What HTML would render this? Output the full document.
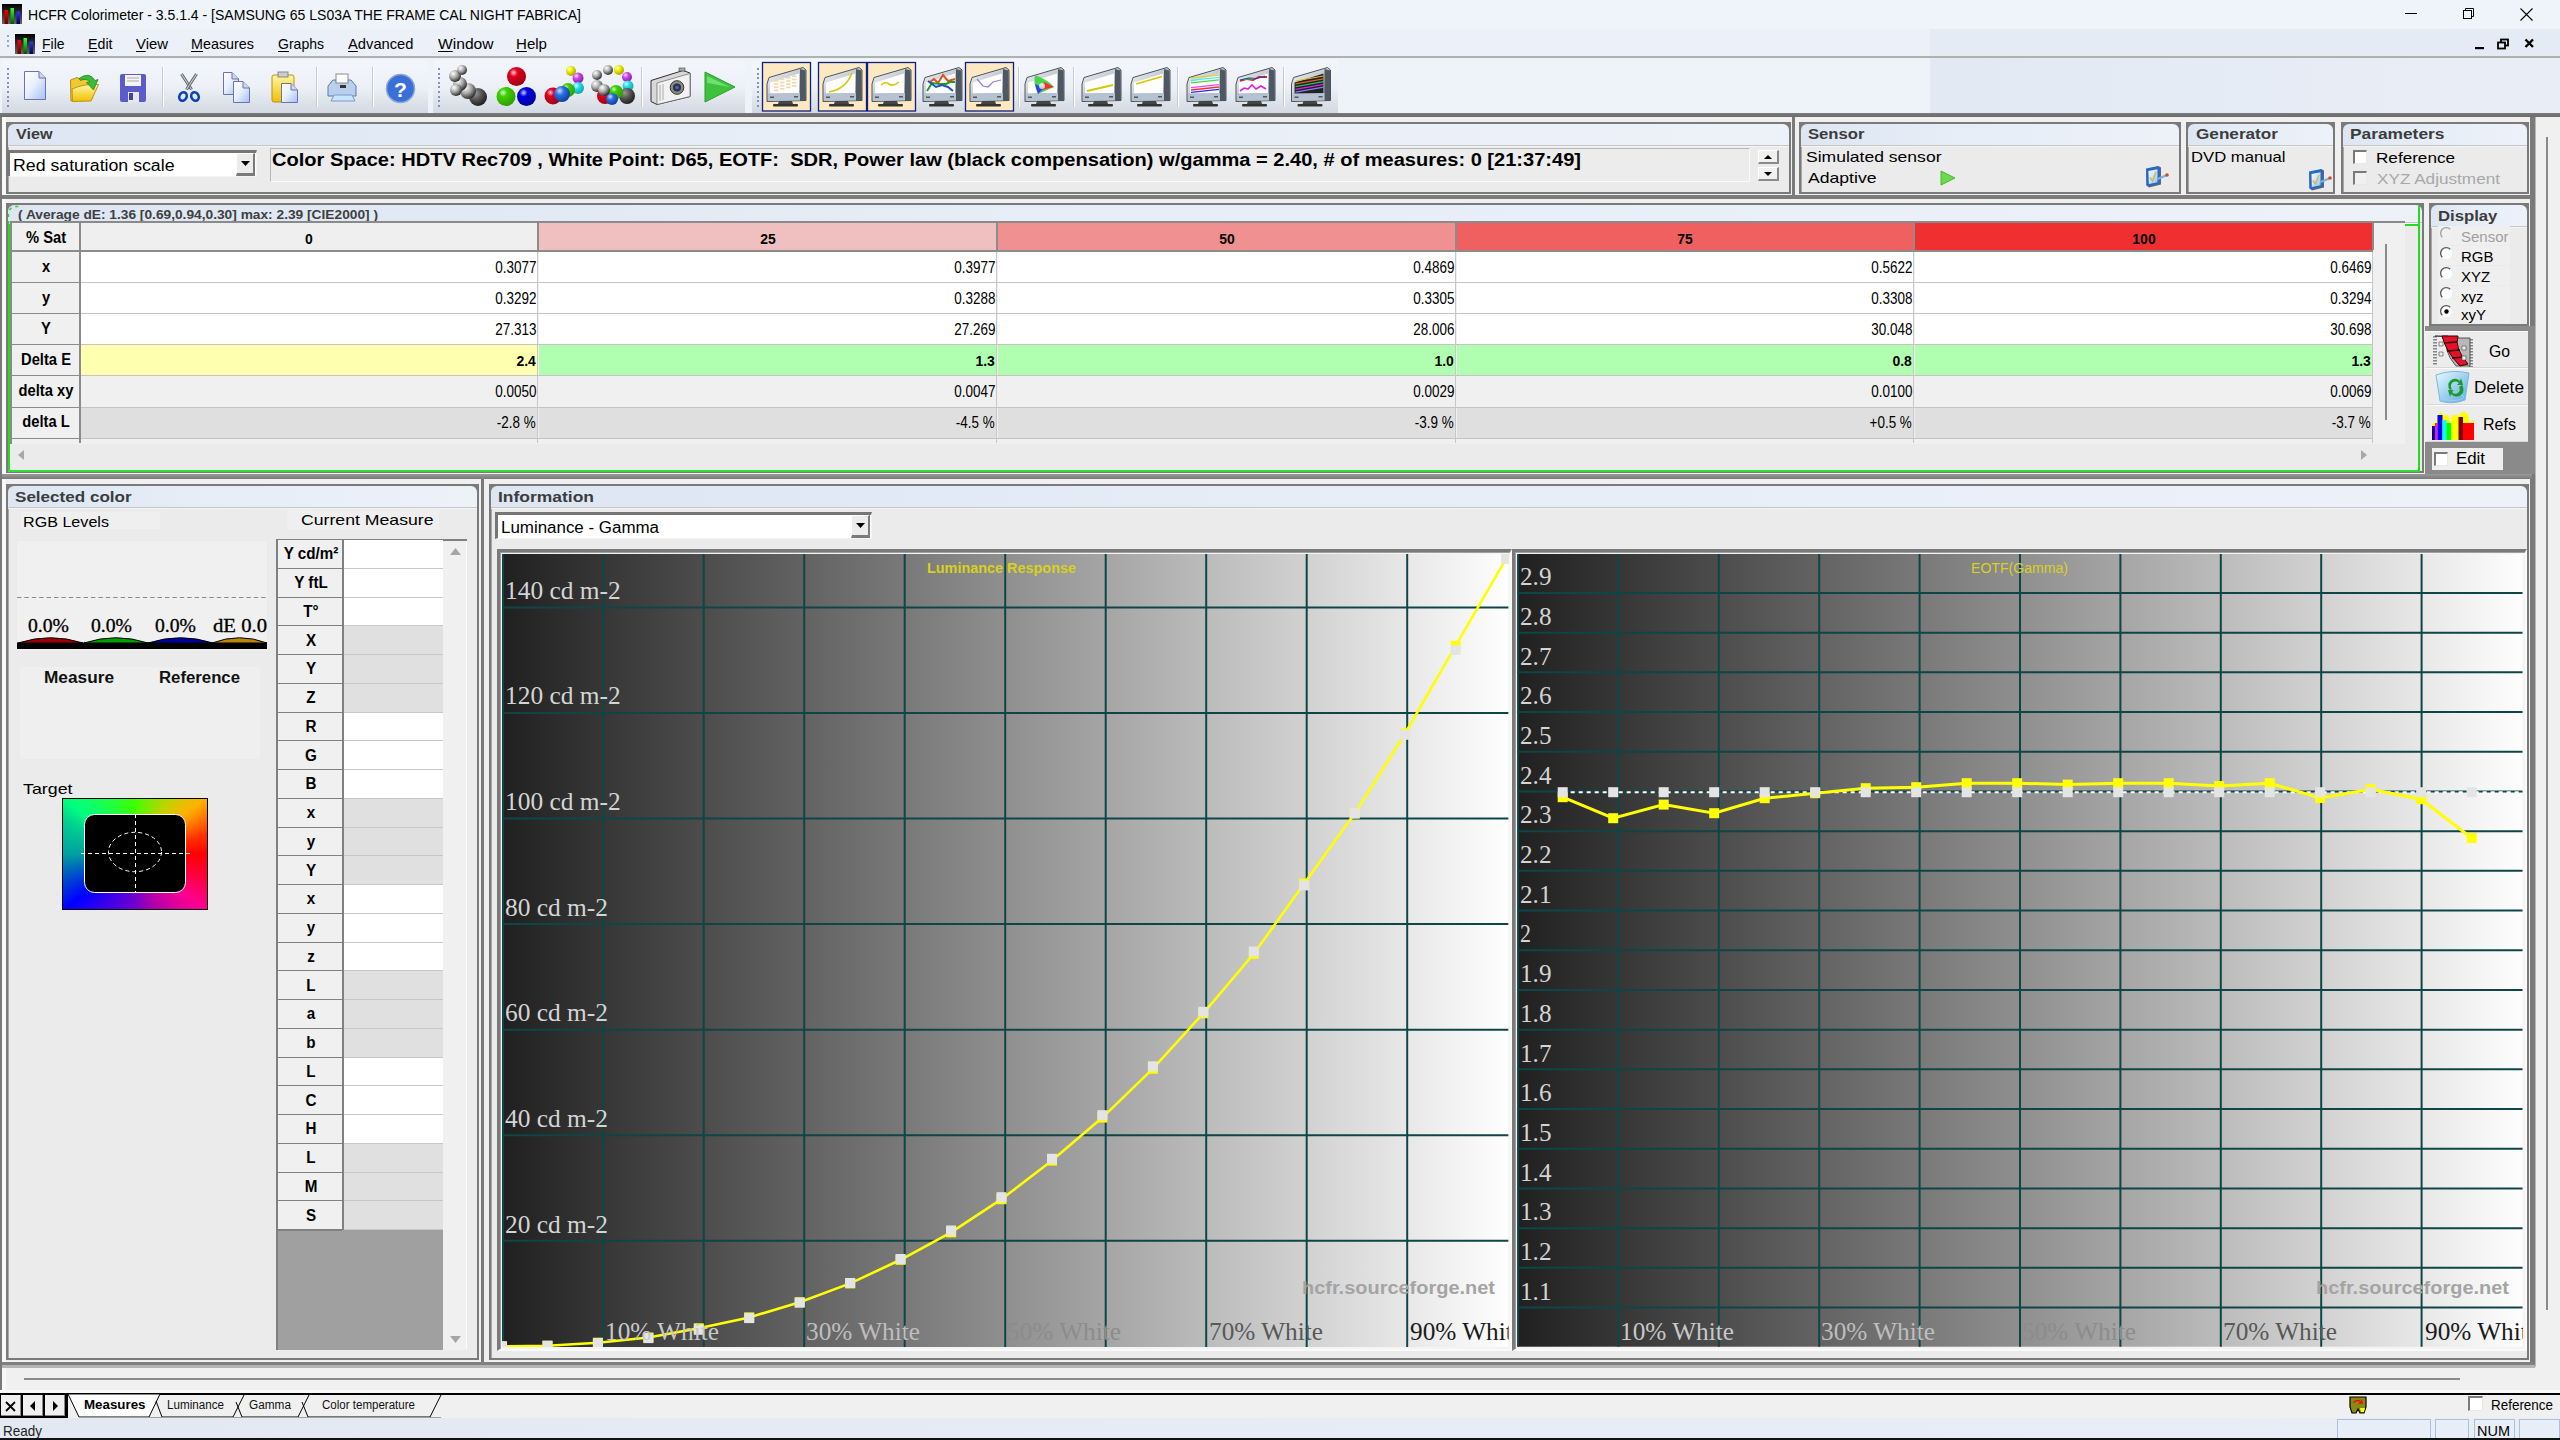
<!DOCTYPE html><html><head><meta charset="utf-8"><title>HCFR</title><style>
*{box-sizing:border-box;margin:0;padding:0}
html,body{width:2560px;height:1440px;overflow:hidden;background:#f0f0f0;font-family:"Liberation Sans",sans-serif;color:#000}
.a{position:absolute}
.t{position:absolute;white-space:nowrap;line-height:1;transform-origin:0 0}
.b{font-weight:bold}
svg{overflow:visible}
</style></head><body>
<div class="a" style="left:0px;top:0px;width:2560px;height:29px;background:#eef4f9"></div>
<svg class="a" style="left:2px;top:4px;" width="20" height="20" viewBox="0 0 20 20"><defs><linearGradient id="ig2_4" x1="0" y1="0" x2="0" y2="1"><stop offset="0" stop-color="#000"/><stop offset="1" stop-color="#666"/></linearGradient><linearGradient id="ir" x1="0" y1="0" x2="0" y2="1"><stop offset="0" stop-color="#f00"/><stop offset="1" stop-color="#600"/></linearGradient><linearGradient id="igg" x1="0" y1="0" x2="0" y2="1"><stop offset="0" stop-color="#3f3"/><stop offset="1" stop-color="#050"/></linearGradient><linearGradient id="ib" x1="0" y1="0" x2="0" y2="1"><stop offset="0" stop-color="#33f"/><stop offset="1" stop-color="#005"/></linearGradient></defs><rect width="20" height="20" fill="url(#ig2_4)"/><rect x="2.5" y="6" width="3.5" height="14" fill="url(#ir)"/><rect x="8.5" y="4" width="3.5" height="16" fill="url(#igg)"/><rect x="14.5" y="7.5" width="3.5" height="12.5" fill="url(#ib)"/></svg>
<div id="t1" class="t" style="left:28.0px;top:6.9px;font-size:15px;transform:scaleX(0.9348);">HCFR Colorimeter - 3.5.1.4 - [SAMSUNG 65 LS03A THE FRAME CAL NIGHT FABRICA]</div>
<svg class="a" style="left:2400px;top:0px;" width="160" height="29" viewBox="0 0 160 29"><line x1="5" y1="13.5" x2="17" y2="13.5" stroke="#000" stroke-width="1"/><rect x="63.5" y="10.5" width="8" height="8" fill="none" stroke="#000"/><path d="M65.5 10.5 V8.5 H73.5 V16.5 H71.5" fill="none" stroke="#000"/><path d="M120.5 8.5 L132.5 20.5 M132.5 8.5 L120.5 20.5" stroke="#000" stroke-width="1.1"/></svg>
<div class="a" style="left:0px;top:29px;width:1930px;height:28px;background:#ecf1f9"></div>
<div class="a" style="left:1930px;top:29px;width:630px;height:28px;background:#e4ebf5"></div>
<div class="a" style="left:0px;top:56px;width:2560px;height:1.5px;background:#b0b0b0"></div>
<div class="a" style="left:0px;top:57.5px;width:2560px;height:1px;background:#ffffff"></div>
<div class="a" style="left:7px;top:35px;width:2px;height:2px;background:#90a8c8"></div>
<div class="a" style="left:7px;top:40px;width:2px;height:2px;background:#90a8c8"></div>
<div class="a" style="left:7px;top:45px;width:2px;height:2px;background:#90a8c8"></div>
<svg class="a" style="left:15px;top:34px;" width="20" height="20" viewBox="0 0 20 20"><defs><linearGradient id="ig15_34" x1="0" y1="0" x2="0" y2="1"><stop offset="0" stop-color="#000"/><stop offset="1" stop-color="#666"/></linearGradient><linearGradient id="ir" x1="0" y1="0" x2="0" y2="1"><stop offset="0" stop-color="#f00"/><stop offset="1" stop-color="#600"/></linearGradient><linearGradient id="igg" x1="0" y1="0" x2="0" y2="1"><stop offset="0" stop-color="#3f3"/><stop offset="1" stop-color="#050"/></linearGradient><linearGradient id="ib" x1="0" y1="0" x2="0" y2="1"><stop offset="0" stop-color="#33f"/><stop offset="1" stop-color="#005"/></linearGradient></defs><rect width="20" height="20" fill="url(#ig15_34)"/><rect x="2.5" y="6" width="3.5" height="14" fill="url(#ir)"/><rect x="8.5" y="4" width="3.5" height="16" fill="url(#igg)"/><rect x="14.5" y="7.5" width="3.5" height="12.5" fill="url(#ib)"/></svg>
<div id="t2" class="t" style="left:41.5px;top:36.3px;font-size:15px;transform:scaleX(0.9302);"><u style="text-underline-offset:2px">F</u>ile</div>
<div id="t3" class="t" style="left:87.5px;top:36.3px;font-size:15px;transform:scaleX(0.9474);"><u style="text-underline-offset:2px">E</u>dit</div>
<div id="t4" class="t" style="left:136.0px;top:36.3px;font-size:15px;transform:scaleX(0.9922);"><u style="text-underline-offset:2px">V</u>iew</div>
<div id="t5" class="t" style="left:191.0px;top:36.3px;font-size:15px;transform:scaleX(0.9564);"><u style="text-underline-offset:2px">M</u>easures</div>
<div id="t6" class="t" style="left:277.5px;top:36.3px;font-size:15px;transform:scaleX(0.9349);"><u style="text-underline-offset:2px">G</u>raphs</div>
<div id="t7" class="t" style="left:347.5px;top:36.3px;font-size:15px;transform:scaleX(0.9815);"><u style="text-underline-offset:2px">A</u>dvanced</div>
<div id="t8" class="t" style="left:437.5px;top:36.3px;font-size:15px;transform:scaleX(1.0398);"><u style="text-underline-offset:2px">W</u>indow</div>
<div id="t9" class="t" style="left:516.0px;top:36.3px;font-size:15px;transform:scaleX(1.0040);"><u style="text-underline-offset:2px">H</u>elp</div>
<svg class="a" style="left:2463px;top:31.5px;" width="95" height="26" viewBox="0 0 95 26"><rect x="12" y="15" width="9" height="2.2" fill="#000"/><rect x="38" y="7.5" width="7" height="6" fill="none" stroke="#000" stroke-width="1.8"/><rect x="35" y="10.5" width="7" height="6" fill="#e6ecf4" stroke="#000" stroke-width="1.8"/><path d="M62.5 7.5 L70 15 M70 7.5 L62.5 15" stroke="#000" stroke-width="2.4"/></svg>
<div class="a" style="left:0px;top:58px;width:2560px;height:55px;background:#eef3fa"></div>
<div class="a" style="left:1930px;top:58px;width:630px;height:55px;background:linear-gradient(90deg,#e2e9f3,#e9eef6)"></div>
<div class="a" style="left:2px;top:60px;width:426px;height:53px;background:linear-gradient(#f3f6fb,#edf1f7 50%,#d3d9e2);border-radius:3px 3px 0 0"></div>
<div class="a" style="left:7px;top:68.0px;width:2px;height:2px;background:#7d95bd"></div>
<div class="a" style="left:7px;top:72.6px;width:2px;height:2px;background:#7d95bd"></div>
<div class="a" style="left:7px;top:77.2px;width:2px;height:2px;background:#7d95bd"></div>
<div class="a" style="left:7px;top:81.8px;width:2px;height:2px;background:#7d95bd"></div>
<div class="a" style="left:7px;top:86.4px;width:2px;height:2px;background:#7d95bd"></div>
<div class="a" style="left:7px;top:91.0px;width:2px;height:2px;background:#7d95bd"></div>
<div class="a" style="left:7px;top:95.6px;width:2px;height:2px;background:#7d95bd"></div>
<div class="a" style="left:7px;top:100.19999999999999px;width:2px;height:2px;background:#7d95bd"></div>
<div class="a" style="left:7px;top:104.8px;width:2px;height:2px;background:#7d95bd"></div>
<div class="a" style="left:433px;top:60px;width:312px;height:53px;background:linear-gradient(#f3f6fb,#edf1f7 50%,#d3d9e2);border-radius:3px 3px 0 0"></div>
<div class="a" style="left:438px;top:68.0px;width:2px;height:2px;background:#7d95bd"></div>
<div class="a" style="left:438px;top:72.6px;width:2px;height:2px;background:#7d95bd"></div>
<div class="a" style="left:438px;top:77.2px;width:2px;height:2px;background:#7d95bd"></div>
<div class="a" style="left:438px;top:81.8px;width:2px;height:2px;background:#7d95bd"></div>
<div class="a" style="left:438px;top:86.4px;width:2px;height:2px;background:#7d95bd"></div>
<div class="a" style="left:438px;top:91.0px;width:2px;height:2px;background:#7d95bd"></div>
<div class="a" style="left:438px;top:95.6px;width:2px;height:2px;background:#7d95bd"></div>
<div class="a" style="left:438px;top:100.19999999999999px;width:2px;height:2px;background:#7d95bd"></div>
<div class="a" style="left:438px;top:104.8px;width:2px;height:2px;background:#7d95bd"></div>
<div class="a" style="left:752px;top:60px;width:586px;height:53px;background:linear-gradient(#f3f6fb,#edf1f7 50%,#d3d9e2);border-radius:3px 3px 0 0"></div>
<div class="a" style="left:757px;top:68.0px;width:2px;height:2px;background:#7d95bd"></div>
<div class="a" style="left:757px;top:72.6px;width:2px;height:2px;background:#7d95bd"></div>
<div class="a" style="left:757px;top:77.2px;width:2px;height:2px;background:#7d95bd"></div>
<div class="a" style="left:757px;top:81.8px;width:2px;height:2px;background:#7d95bd"></div>
<div class="a" style="left:757px;top:86.4px;width:2px;height:2px;background:#7d95bd"></div>
<div class="a" style="left:757px;top:91.0px;width:2px;height:2px;background:#7d95bd"></div>
<div class="a" style="left:757px;top:95.6px;width:2px;height:2px;background:#7d95bd"></div>
<div class="a" style="left:757px;top:100.19999999999999px;width:2px;height:2px;background:#7d95bd"></div>
<div class="a" style="left:757px;top:104.8px;width:2px;height:2px;background:#7d95bd"></div>
<div class="a" style="left:162px;top:67px;width:1px;height:40px;background:#c5cbd3;box-shadow:1px 0 0 #fff"></div>
<div class="a" style="left:316px;top:67px;width:1px;height:40px;background:#c5cbd3;box-shadow:1px 0 0 #fff"></div>
<div class="a" style="left:372px;top:67px;width:1px;height:40px;background:#c5cbd3;box-shadow:1px 0 0 #fff"></div>
<div class="a" style="left:641px;top:67px;width:1px;height:40px;background:#c5cbd3;box-shadow:1px 0 0 #fff"></div>
<div class="a" style="left:1018px;top:67px;width:1px;height:40px;background:#c5cbd3;box-shadow:1px 0 0 #fff"></div>
<div class="a" style="left:1073px;top:67px;width:1px;height:40px;background:#c5cbd3;box-shadow:1px 0 0 #fff"></div>
<div class="a" style="left:1177px;top:67px;width:1px;height:40px;background:#c5cbd3;box-shadow:1px 0 0 #fff"></div>
<div class="a" style="left:1283px;top:67px;width:1px;height:40px;background:#c5cbd3;box-shadow:1px 0 0 #fff"></div>
<div class="a" style="left:0px;top:113px;width:2560px;height:4px;background:linear-gradient(#7a7a7a,#6b6b6b)"></div>
<svg class="a" style="left:0px;top:0px;" width="1" height="1" viewBox="0 0 1 1"><defs>
<radialGradient id="gball" cx="0.35" cy="0.3" r="0.7"><stop offset="0" stop-color="#fff"/><stop offset="0.5" stop-color="#aaa"/><stop offset="1" stop-color="#333"/></radialGradient>
<radialGradient id="rball" cx="0.35" cy="0.3" r="0.7"><stop offset="0" stop-color="#fcc"/><stop offset="0.3" stop-color="#e00020"/><stop offset="1" stop-color="#a00010"/></radialGradient>
<radialGradient id="grball" cx="0.35" cy="0.3" r="0.7"><stop offset="0" stop-color="#cfc"/><stop offset="0.3" stop-color="#40d000"/><stop offset="1" stop-color="#30a000"/></radialGradient>
<radialGradient id="bball" cx="0.35" cy="0.3" r="0.7"><stop offset="0" stop-color="#ccf"/><stop offset="0.3" stop-color="#0000e0"/><stop offset="1" stop-color="#0000a0"/></radialGradient>
<radialGradient id="yball" cx="0.35" cy="0.3" r="0.7"><stop offset="0" stop-color="#ffd"/><stop offset="0.4" stop-color="#ee0"/><stop offset="1" stop-color="#aa0"/></radialGradient>
<radialGradient id="mball" cx="0.35" cy="0.3" r="0.7"><stop offset="0" stop-color="#fdf"/><stop offset="0.4" stop-color="#c4e"/><stop offset="1" stop-color="#82a"/></radialGradient>
<radialGradient id="cball" cx="0.35" cy="0.3" r="0.7"><stop offset="0" stop-color="#dff"/><stop offset="0.4" stop-color="#2de"/><stop offset="1" stop-color="#1aa"/></radialGradient>
<radialGradient id="dball" cx="0.35" cy="0.3" r="0.7"><stop offset="0" stop-color="#999"/><stop offset="0.5" stop-color="#555"/><stop offset="1" stop-color="#222"/></radialGradient>
<radialGradient id="b2ball" cx="0.35" cy="0.3" r="0.7"><stop offset="0" stop-color="#cdf"/><stop offset="0.4" stop-color="#2a6ee0"/><stop offset="1" stop-color="#1040a0"/></radialGradient>
<linearGradient id="page" x1="0" y1="0" x2="1" y2="1"><stop offset="0" stop-color="#fff"/><stop offset="0.45" stop-color="#e8f0fc"/><stop offset="1" stop-color="#a4c0f4"/></linearGradient>
<linearGradient id="fold" x1="0" y1="0" x2="0" y2="1"><stop offset="0" stop-color="#fff7a0"/><stop offset="1" stop-color="#f0c000"/></linearGradient>
<linearGradient id="mon" x1="0" y1="0" x2="1" y2="1"><stop offset="0" stop-color="#f4f6f8"/><stop offset="0.6" stop-color="#b8c0c8"/><stop offset="1" stop-color="#6a737c"/></linearGradient>
</defs></svg>
<svg class="a" style="left:0px;top:0px;top:0;left:0" width="760" height="120" viewBox="0 0 760 120"><path d="M24.5 71.5 H39 L45.5 78 V99.5 H24.5 Z" fill="url(#page)" stroke="#7070b0"/><path d="M39 71.5 V78 H45.5" fill="#c8d8f0" stroke="#7070b0"/><path d="M70.5 80 L77 77.5 L81 79.5 L92 79.5 L92 99 L71 101 Z" fill="#f2c832" stroke="#b88a10" stroke-width="1"/><path d="M72 89 Q84 83.5 98.5 84.5 L91 101 L72.5 101.5 Z" fill="url(#fold)" stroke="#c09018" stroke-width="1"/><path d="M79 78.5 Q89 71 95 80.5 L98 79.5 L93.5 90 L86.5 82.5 L90 82 Q86 77.5 80.5 80.5 Z" fill="#3cbc3c" stroke="#1f8a1f" stroke-width=".8"/><rect x="120" y="74" width="26" height="28" rx="2" fill="#5a5cc8"/><rect x="125" y="75" width="16" height="11" fill="#f4f4f4"/><line x1="127" y1="78" x2="139" y2="78" stroke="#aaa"/><line x1="127" y1="81" x2="139" y2="81" stroke="#aaa"/><rect x="128" y="92" width="11" height="10" fill="#e8e8e8"/><rect x="129" y="93" width="4" height="7" fill="#4040b0"/><path d="M181.5 74 L191.5 89.5" stroke="#5a6068" stroke-width="3"/><path d="M181.5 74 L191.5 89.5" stroke="#c8ccd2" stroke-width="1.2"/><path d="M196.5 74 L186.5 89.5" stroke="#5a6068" stroke-width="3"/><path d="M196.5 74 L186.5 89.5" stroke="#c8ccd2" stroke-width="1.2"/><ellipse cx="183" cy="96.5" rx="3.6" ry="4.4" transform="rotate(25 183 96.5)" fill="none" stroke="#0a42b8" stroke-width="2.6"/><ellipse cx="195" cy="96.5" rx="3.6" ry="4.4" transform="rotate(-25 195 96.5)" fill="none" stroke="#0a42b8" stroke-width="2.6"/><path d="M223.5 72.5 H232 L238.5 79 V94.5 H223.5 Z" fill="url(#page)" stroke="#7070b0"/><path d="M232 72.5 V79 H238.5" fill="#c8d8f0" stroke="#7070b0"/><path d="M233.5 81.5 H243 L249.5 88 V102.5 H233.5 Z" fill="url(#page)" stroke="#7070b0"/><path d="M243 81.5 V88 H249.5" fill="#c8d8f0" stroke="#7070b0"/><rect x="272" y="75" width="22" height="27" rx="2" fill="url(#fold)" stroke="#b89020"/><rect x="278" y="72" width="10" height="5" fill="#ccc" stroke="#888"/><path d="M281.5 83.5 H291 L297.5 90 V102.5 H281.5 Z" fill="url(#page)" stroke="#7070b0"/><path d="M291 83.5 V90 H297.5" fill="#c8d8f0" stroke="#7070b0"/><path d="M333 80 H351 L356 86 V96 H328 V86 Z" fill="#b8d0ec" stroke="#5a7aa8"/><rect x="336" y="74" width="12" height="9" fill="#fff" stroke="#889"/><rect x="340" y="85" width="6" height="3" fill="#333"/><path d="M334 95 H352 L355 101 H331 Z" fill="#c8e4ff" stroke="#7a9ac8"/><circle cx="400.5" cy="88.5" r="14" fill="#3a6ed8" stroke="#8aa8d0" stroke-width="1.5"/><text x="400.5" y="97" font-family="Liberation Sans" font-weight="bold" font-size="21" fill="#fff" text-anchor="middle">?</text><circle cx="478" cy="97" r="9" fill="url(#dball)"/><circle cx="468" cy="91" r="8" fill="url(#gball)"/><circle cx="460" cy="84" r="7" fill="url(#gball)"/><circle cx="455" cy="76" r="6" fill="url(#gball)"/><circle cx="462" cy="70" r="5" fill="url(#gball)"/><circle cx="456" cy="90" r="6" fill="url(#gball)"/><circle cx="516.5" cy="76.5" r="9.5" fill="url(#rball)"/><circle cx="506" cy="96.5" r="9.5" fill="url(#grball)"/><circle cx="526.5" cy="96.5" r="9.5" fill="url(#bball)"/><circle cx="571" cy="71" r="5" fill="url(#yball)"/><circle cx="578" cy="78" r="5.5" fill="url(#mball)"/><circle cx="578" cy="88" r="6" fill="url(#cball)"/><circle cx="568" cy="90" r="7" fill="url(#grball)"/><circle cx="553" cy="96" r="8.5" fill="url(#rball)"/><circle cx="562" cy="94" r="8" fill="url(#b2ball)"/><circle cx="597" cy="75" r="5" fill="url(#gball)"/><circle cx="608" cy="70" r="5" fill="url(#gball)"/><circle cx="619" cy="70" r="5" fill="url(#yball)"/><circle cx="627" cy="77" r="5" fill="url(#mball)"/><circle cx="628" cy="86" r="5.5" fill="url(#cball)"/><circle cx="597" cy="86" r="6" fill="url(#gball)"/><circle cx="605" cy="96" r="8" fill="url(#rball)"/><circle cx="627" cy="96" r="8" fill="url(#dball)"/><circle cx="616" cy="92" r="7" fill="url(#grball)"/><circle cx="612" cy="99" r="6" fill="url(#b2ball)"/><circle cx="604" cy="90" r="6" fill="url(#gball)"/><path d="M651 80.5 L683 70.5 L690 73 V96.5 L657 104.5 L651 101.5 Z" fill="#d8d8d8" stroke="#2e2e2e" stroke-width="1"/><path d="M657 83 L690 73.5 V96.5 L657 104.5 Z" fill="#f2f2f2" stroke="#666" stroke-width=".7"/><path d="M660 85 V101 M663 84 V100" stroke="#999" stroke-width=".8"/><rect x="679" y="68" width="6" height="3" fill="#aaa" stroke="#444" stroke-width=".6"/><circle cx="677" cy="87.5" r="6.8" fill="#8a8a8a" stroke="#333" stroke-width="1"/><circle cx="677" cy="87.5" r="4" fill="#333"/><circle cx="677" cy="87.5" r="1.8" fill="#2a6ae0"/><path d="M705 72 L735 87 L705 102 Z" fill="#3cc23c" stroke="#28a028" stroke-width="1"/><path d="M707 76 L730 87 L707 83 Z" fill="#6ee06e"/></svg>
<svg class="a" style="left:0px;top:0px;top:0;left:0" width="1400" height="120" viewBox="0 0 1400 120"><rect x="762.5" y="62.5" width="48" height="48.5" fill="#fde9c1" stroke="#10207a" stroke-width="1.3"/><path d="M767 84 L769 77.5 L803 67.5 L806 70 V100.5 L767 101.5 Z" fill="url(#mon)" stroke="#3c444c" stroke-width="0.9"/><path d="M800 69 L805.5 70.5 V100 L800 100.5 Z" fill="#4e5862"/><path d="M770 82.5 L799 73.5 V93 L770 93.5 Z" fill="#fdfdfd"/><path d="M768 93.5 L800 93 V100.5 L768 101 Z" fill="#b4c2d2"/><rect x="770" y="96.5" width="4" height="1.5" fill="#555"/><rect x="794" y="96" width="4" height="1.5" fill="#555"/><path d="M779 101 H792 L793 104 H778 Z" fill="#444"/><rect x="773" y="104" width="25" height="2.6" rx="1" fill="#333"/><rect x="774" y="80.0" width="4.5" height="1.6" fill="#f0d8a8"/><rect x="780" y="78.5" width="4.5" height="1.6" fill="#f0d8a8"/><rect x="786" y="77.0" width="4.5" height="1.6" fill="#f0d8a8"/><rect x="792" y="75.5" width="4.5" height="1.6" fill="#f0d8a8"/><rect x="774" y="83.2" width="4.5" height="1.6" fill="#f0d8a8"/><rect x="780" y="81.7" width="4.5" height="1.6" fill="#f0d8a8"/><rect x="786" y="80.2" width="4.5" height="1.6" fill="#f0d8a8"/><rect x="792" y="78.7" width="4.5" height="1.6" fill="#f0d8a8"/><rect x="774" y="86.4" width="4.5" height="1.6" fill="#f0d8a8"/><rect x="780" y="84.9" width="4.5" height="1.6" fill="#f0d8a8"/><rect x="786" y="83.4" width="4.5" height="1.6" fill="#f0d8a8"/><rect x="792" y="81.9" width="4.5" height="1.6" fill="#f0d8a8"/><rect x="774" y="89.6" width="4.5" height="1.6" fill="#f0d8a8"/><rect x="780" y="88.1" width="4.5" height="1.6" fill="#f0d8a8"/><rect x="786" y="86.6" width="4.5" height="1.6" fill="#f0d8a8"/><rect x="792" y="85.1" width="4.5" height="1.6" fill="#f0d8a8"/><rect x="818.5" y="62.5" width="48" height="48.5" fill="#fde9c1" stroke="#10207a" stroke-width="1.3"/><path d="M823 84 L825 77.5 L859 67.5 L862 70 V100.5 L823 101.5 Z" fill="url(#mon)" stroke="#3c444c" stroke-width="0.9"/><path d="M856 69 L861.5 70.5 V100 L856 100.5 Z" fill="#4e5862"/><path d="M826 82.5 L855 73.5 V93 L826 93.5 Z" fill="#fdfdfd"/><path d="M824 93.5 L856 93 V100.5 L824 101 Z" fill="#b4c2d2"/><rect x="826" y="96.5" width="4" height="1.5" fill="#555"/><rect x="850" y="96" width="4" height="1.5" fill="#555"/><path d="M835 101 H848 L849 104 H834 Z" fill="#444"/><rect x="829" y="104" width="25" height="2.6" rx="1" fill="#333"/><path d="M829 92 Q846 89 852 73" fill="none" stroke="#d8c800" stroke-width="1.6"/><rect x="867.5" y="62.5" width="48" height="48.5" fill="#fde9c1" stroke="#10207a" stroke-width="1.3"/><path d="M872 84 L874 77.5 L908 67.5 L911 70 V100.5 L872 101.5 Z" fill="url(#mon)" stroke="#3c444c" stroke-width="0.9"/><path d="M905 69 L910.5 70.5 V100 L905 100.5 Z" fill="#4e5862"/><path d="M875 82.5 L904 73.5 V93 L875 93.5 Z" fill="#fdfdfd"/><path d="M873 93.5 L905 93 V100.5 L873 101 Z" fill="#b4c2d2"/><rect x="875" y="96.5" width="4" height="1.5" fill="#555"/><rect x="899" y="96" width="4" height="1.5" fill="#555"/><path d="M884 101 H897 L898 104 H883 Z" fill="#444"/><rect x="878" y="104" width="25" height="2.6" rx="1" fill="#333"/><path d="M881 85 Q885 81 889 84 T899 82" fill="none" stroke="#d8c800" stroke-width="1.6"/><path d="M923 84 L925 77.5 L959 67.5 L962 70 V100.5 L923 101.5 Z" fill="url(#mon)" stroke="#3c444c" stroke-width="0.9"/><path d="M956 69 L961.5 70.5 V100 L956 100.5 Z" fill="#4e5862"/><path d="M926 82.5 L955 73.5 V93 L926 93.5 Z" fill="#fdfdfd"/><path d="M924 93.5 L956 93 V100.5 L924 101 Z" fill="#b4c2d2"/><rect x="926" y="96.5" width="4" height="1.5" fill="#555"/><rect x="950" y="96" width="4" height="1.5" fill="#555"/><path d="M935 101 H948 L949 104 H934 Z" fill="#444"/><rect x="929" y="104" width="25" height="2.6" rx="1" fill="#333"/><path d="M930 82 L934 79 L938 83 L943 75 L948 81 L955 79" fill="none" stroke="#e05020" stroke-width="2"/><path d="M927 91 L932 83 L940 84 L946 84 L950 82 L955 82" fill="none" stroke="#20a020" stroke-width="2"/><path d="M928 81 L936 87 L942 85 L948 87 L953 91" fill="none" stroke="#2050c0" stroke-width="2"/><rect x="965.5" y="62.5" width="48" height="48.5" fill="#fde9c1" stroke="#10207a" stroke-width="1.3"/><path d="M970 84 L972 77.5 L1006 67.5 L1009 70 V100.5 L970 101.5 Z" fill="url(#mon)" stroke="#3c444c" stroke-width="0.9"/><path d="M1003 69 L1008.5 70.5 V100 L1003 100.5 Z" fill="#4e5862"/><path d="M973 82.5 L1002 73.5 V93 L973 93.5 Z" fill="#fdfdfd"/><path d="M971 93.5 L1003 93 V100.5 L971 101 Z" fill="#b4c2d2"/><rect x="973" y="96.5" width="4" height="1.5" fill="#555"/><rect x="997" y="96" width="4" height="1.5" fill="#555"/><path d="M982 101 H995 L996 104 H981 Z" fill="#444"/><rect x="976" y="104" width="25" height="2.6" rx="1" fill="#333"/><path d="M977 79 L983 86 L988 87 L993 82 L1001 80" fill="none" stroke="#9080e0" stroke-width="1.2"/><path d="M1025 84 L1027 77.5 L1061 67.5 L1064 70 V100.5 L1025 101.5 Z" fill="url(#mon)" stroke="#3c444c" stroke-width="0.9"/><path d="M1058 69 L1063.5 70.5 V100 L1058 100.5 Z" fill="#4e5862"/><path d="M1028 82.5 L1057 73.5 V93 L1028 93.5 Z" fill="#fdfdfd"/><path d="M1026 93.5 L1058 93 V100.5 L1026 101 Z" fill="#b4c2d2"/><rect x="1028" y="96.5" width="4" height="1.5" fill="#555"/><rect x="1052" y="96" width="4" height="1.5" fill="#555"/><path d="M1037 101 H1050 L1051 104 H1036 Z" fill="#444"/><rect x="1031" y="104" width="25" height="2.6" rx="1" fill="#333"/><path d="M1035 75 Q1048 80 1054 87 L1038 94 Q1033 84 1035 75 Z" fill="#50d050"/><path d="M1044 82 L1054 87 L1042 90 Z" fill="#f03030"/><path d="M1035 84 L1044 88 L1038 94 Z" fill="#3040f0"/><circle cx="1042" cy="86" r="3" fill="#fff" opacity=".7"/><path d="M1082 84 L1084 77.5 L1118 67.5 L1121 70 V100.5 L1082 101.5 Z" fill="url(#mon)" stroke="#3c444c" stroke-width="0.9"/><path d="M1115 69 L1120.5 70.5 V100 L1115 100.5 Z" fill="#4e5862"/><path d="M1085 82.5 L1114 73.5 V93 L1085 93.5 Z" fill="#fdfdfd"/><path d="M1083 93.5 L1115 93 V100.5 L1083 101 Z" fill="#b4c2d2"/><rect x="1085" y="96.5" width="4" height="1.5" fill="#555"/><rect x="1109" y="96" width="4" height="1.5" fill="#555"/><path d="M1094 101 H1107 L1108 104 H1093 Z" fill="#444"/><rect x="1088" y="104" width="25" height="2.6" rx="1" fill="#333"/><path d="M1087 91 L1113 85" stroke="#d8c800" stroke-width="1.8"/><path d="M1131 84 L1133 77.5 L1167 67.5 L1170 70 V100.5 L1131 101.5 Z" fill="url(#mon)" stroke="#3c444c" stroke-width="0.9"/><path d="M1164 69 L1169.5 70.5 V100 L1164 100.5 Z" fill="#4e5862"/><path d="M1134 82.5 L1163 73.5 V93 L1134 93.5 Z" fill="#fdfdfd"/><path d="M1132 93.5 L1164 93 V100.5 L1132 101 Z" fill="#b4c2d2"/><rect x="1134" y="96.5" width="4" height="1.5" fill="#555"/><rect x="1158" y="96" width="4" height="1.5" fill="#555"/><path d="M1143 101 H1156 L1157 104 H1142 Z" fill="#444"/><rect x="1137" y="104" width="25" height="2.6" rx="1" fill="#333"/><path d="M1136 84 L1162 76.5" stroke="#d8c800" stroke-width="1.8"/><path d="M1187 84 L1189 77.5 L1223 67.5 L1226 70 V100.5 L1187 101.5 Z" fill="url(#mon)" stroke="#3c444c" stroke-width="0.9"/><path d="M1220 69 L1225.5 70.5 V100 L1220 100.5 Z" fill="#4e5862"/><path d="M1190 82.5 L1219 73.5 V93 L1190 93.5 Z" fill="#fdfdfd"/><path d="M1188 93.5 L1220 93 V100.5 L1188 101 Z" fill="#b4c2d2"/><rect x="1190" y="96.5" width="4" height="1.5" fill="#555"/><rect x="1214" y="96" width="4" height="1.5" fill="#555"/><path d="M1199 101 H1212 L1213 104 H1198 Z" fill="#444"/><rect x="1193" y="104" width="25" height="2.6" rx="1" fill="#333"/><line x1="1191" y1="78.0" x2="1219" y2="75.0" stroke="#e0d040" stroke-width="1.3"/><line x1="1191" y1="80.4" x2="1219" y2="77.4" stroke="#40f0f0" stroke-width="1.3"/><line x1="1191" y1="82.8" x2="1219" y2="79.8" stroke="#40e040" stroke-width="1.3"/><line x1="1191" y1="85.2" x2="1219" y2="82.2" stroke="#ffffff" stroke-width="1.3"/><line x1="1191" y1="87.6" x2="1219" y2="84.6" stroke="#ff40ff" stroke-width="1.3"/><line x1="1191" y1="90.0" x2="1219" y2="87.0" stroke="#ff3030" stroke-width="1.3"/><line x1="1191" y1="92.4" x2="1219" y2="89.4" stroke="#2030ff" stroke-width="1.3"/><path d="M1236 84 L1238 77.5 L1272 67.5 L1275 70 V100.5 L1236 101.5 Z" fill="url(#mon)" stroke="#3c444c" stroke-width="0.9"/><path d="M1269 69 L1274.5 70.5 V100 L1269 100.5 Z" fill="#4e5862"/><path d="M1239 82.5 L1268 73.5 V93 L1239 93.5 Z" fill="#fdfdfd"/><path d="M1237 93.5 L1269 93 V100.5 L1237 101 Z" fill="#b4c2d2"/><rect x="1239" y="96.5" width="4" height="1.5" fill="#555"/><rect x="1263" y="96" width="4" height="1.5" fill="#555"/><path d="M1248 101 H1261 L1262 104 H1247 Z" fill="#444"/><rect x="1242" y="104" width="25" height="2.6" rx="1" fill="#333"/><path d="M1240 81 L1247 79 L1253 80 L1259 77 L1267 77" fill="none" stroke="#e02020" stroke-width="1.8"/><path d="M1240 80 L1249 78 L1257 78.5 L1265 76" fill="none" stroke="#2040e0" stroke-width="1.2"/><path d="M1244 79.5 L1253 79" stroke="#20c020" stroke-width="1.2"/><path d="M1240 91 L1244 88 L1248 89 L1252 85 L1256 89 L1261 86 L1266 89" fill="none" stroke="#e020e0" stroke-width="1.6"/><path d="M1291.5 84 L1293.5 77.5 L1327.5 67.5 L1330.5 70 V100.5 L1291.5 101.5 Z" fill="url(#mon)" stroke="#3c444c" stroke-width="0.9"/><path d="M1324.5 69 L1330.0 70.5 V100 L1324.5 100.5 Z" fill="#4e5862"/><path d="M1294.5 82.5 L1323.5 73.5 V93 L1294.5 93.5 Z" fill="#fdfdfd"/><path d="M1292.5 93.5 L1324.5 93 V100.5 L1292.5 101 Z" fill="#b4c2d2"/><rect x="1294.5" y="96.5" width="4" height="1.5" fill="#555"/><rect x="1318.5" y="96" width="4" height="1.5" fill="#555"/><path d="M1303.5 101 H1316.5 L1317.5 104 H1302.5 Z" fill="#444"/><rect x="1297.5" y="104" width="25" height="2.6" rx="1" fill="#333"/><path d="M1294.5 82.5 L1323.5 73.5 V93 L1294.5 93.5 Z" fill="#222"/><line x1="1295.5" y1="81.0" x2="1323.5" y2="76.0" stroke="#e0c020" stroke-width="1.2"/><line x1="1295.5" y1="83.8" x2="1323.5" y2="78.8" stroke="#e06020" stroke-width="1.2"/><line x1="1295.5" y1="86.6" x2="1323.5" y2="81.6" stroke="#20c060" stroke-width="1.2"/><line x1="1295.5" y1="89.4" x2="1323.5" y2="84.4" stroke="#e020e0" stroke-width="1.2"/><line x1="1295.5" y1="92.2" x2="1323.5" y2="87.2" stroke="#8080ff" stroke-width="1.2"/></svg>
<div class="a" style="left:0px;top:117px;width:2560px;height:1276px;background:#f0f0f0"></div>
<div class="a" style="left:2px;top:117px;width:4px;height:1273px;background:#f8f8f8"></div>
<div class="a" style="left:0px;top:117px;width:2px;height:1273px;background:#787878"></div>
<div class="a" style="left:2530px;top:117px;width:5px;height:1250px;background:#7a7a7a"></div>
<div class="a" style="left:2535px;top:117px;width:1px;height:1250px;background:#b8b8b8"></div>
<div class="a" style="left:2546px;top:137px;width:2px;height:1173px;background:#8a8a8a"></div>
<div class="a" style="left:2px;top:195px;width:2530px;height:4px;background:#7c7c7c"></div>
<div class="a" style="left:2px;top:474px;width:2530px;height:5px;background:linear-gradient(#9a9a9a,#7a7a7a)"></div>
<div class="a" style="left:1792px;top:117px;width:3px;height:78px;background:#7a7a7a"></div>
<div class="a" style="left:481px;top:479px;width:3px;height:884px;background:#7a7a7a"></div>
<div class="a" style="left:2px;top:1362px;width:2533px;height:3px;background:#808080"></div>
<div class="a" style="left:2px;top:1365px;width:2533px;height:3px;background:#b4b4b4"></div>
<div class="a" style="left:24px;top:1378px;width:2436px;height:2px;background:#8a8a8a"></div>
<div class="a" style="left:6px;top:122px;width:1785px;height:72px;background:#ebebeb;border:2px solid #7a7a7a;box-shadow:inset 1px 1px 0 #a8a8a8"></div>
<div class="a" style="left:8px;top:124px;width:1781px;height:21px;background:#7a7a7a"></div>
<div class="a" style="left:8px;top:124px;width:1781px;height:21px;background:linear-gradient(90deg,#dde6f2,#e6edf7 40%,#edf2f9);border-radius:6px 6px 0 0"></div>
<div class="a" style="left:8px;top:145px;width:1781px;height:1px;background:#c6c6c6"></div>
<div class="a" style="left:8px;top:146px;width:1781px;height:1px;background:#f4f4f4"></div>
<div id="t10" class="t" style="left:15.5px;top:127.4px;font-size:14px;font-weight:bold;transform:scaleX(1.1530);color:#3c3c3c">View</div>
<div class="a" style="left:1799px;top:122px;width:382px;height:72px;background:#ebebeb;border:2px solid #7a7a7a;box-shadow:inset 1px 1px 0 #a8a8a8"></div>
<div class="a" style="left:1801px;top:124px;width:378px;height:21px;background:#7a7a7a"></div>
<div class="a" style="left:1801px;top:124px;width:378px;height:21px;background:linear-gradient(90deg,#dde6f2,#e6edf7 40%,#edf2f9);border-radius:6px 6px 0 0"></div>
<div class="a" style="left:1801px;top:145px;width:378px;height:1px;background:#c6c6c6"></div>
<div class="a" style="left:1801px;top:146px;width:378px;height:1px;background:#f4f4f4"></div>
<div id="t11" class="t" style="left:1807.6px;top:127.4px;font-size:14px;font-weight:bold;transform:scaleX(1.1882);color:#3c3c3c">Sensor</div>
<div class="a" style="left:2186px;top:122px;width:149px;height:72px;background:#ebebeb;border:2px solid #7a7a7a;box-shadow:inset 1px 1px 0 #a8a8a8"></div>
<div class="a" style="left:2188px;top:124px;width:145px;height:21px;background:#7a7a7a"></div>
<div class="a" style="left:2188px;top:124px;width:145px;height:21px;background:linear-gradient(90deg,#dde6f2,#e6edf7 40%,#edf2f9);border-radius:6px 6px 0 0"></div>
<div class="a" style="left:2188px;top:145px;width:145px;height:1px;background:#c6c6c6"></div>
<div class="a" style="left:2188px;top:146px;width:145px;height:1px;background:#f4f4f4"></div>
<div id="t12" class="t" style="left:2195.6px;top:127.4px;font-size:14px;font-weight:bold;transform:scaleX(1.2253);color:#3c3c3c">Generator</div>
<div class="a" style="left:2341px;top:122px;width:188px;height:72px;background:#ebebeb;border:2px solid #7a7a7a;box-shadow:inset 1px 1px 0 #a8a8a8"></div>
<div class="a" style="left:2343px;top:124px;width:184px;height:21px;background:#7a7a7a"></div>
<div class="a" style="left:2343px;top:124px;width:184px;height:21px;background:linear-gradient(90deg,#dde6f2,#e6edf7 40%,#edf2f9);border-radius:6px 6px 0 0"></div>
<div class="a" style="left:2343px;top:145px;width:184px;height:1px;background:#c6c6c6"></div>
<div class="a" style="left:2343px;top:146px;width:184px;height:1px;background:#f4f4f4"></div>
<div id="t13" class="t" style="left:2349.8px;top:127.4px;font-size:14px;font-weight:bold;transform:scaleX(1.2375);color:#3c3c3c">Parameters</div>
<div class="a" style="left:7px;top:150px;width:250px;height:27px;background:#fff;border-top:3px solid #767676;border-left:3px solid #767676;border-bottom:1px solid #f4f4f4;border-right:1px solid #f4f4f4"></div>
<div class="a" style="left:236px;top:153px;width:19px;height:23px;background:#ececec;border-right:2px solid #7a7a7a;border-bottom:3px solid #7a7a7a;border-top:1px solid #fff;border-left:1px solid #fff"></div>
<svg class="a" style="left:241px;top:160.5px;" width="10" height="6" viewBox="0 0 10 6"><path d="M0 0 H9 L4.5 5 Z" fill="#000"/></svg>
<div id="t14" class="t" style="left:13.0px;top:158.2px;font-size:16px;transform:scaleX(1.1072);">Red saturation scale</div>
<div class="a" style="left:270px;top:148px;width:1480px;height:34px;background:#ececec;border-left:1px solid #b8b8b8;border-top:1px solid #b8b8b8;border-right:1px solid #fafafa;border-bottom:1px solid #fafafa"></div>
<div id="t15" class="t" style="left:272.0px;top:150.8px;font-size:18px;font-weight:bold;transform:scaleX(1.1142);">Color Space: HDTV Rec709 , White Point: D65, EOTF:&nbsp; SDR, Power law (black compensation) w/gamma = 2.40, # of measures: 0 [21:37:49]</div>
<div class="a" style="left:1758px;top:150px;width:21px;height:14px;background:#f0f0f0;border-top:1px solid #fff;border-left:1px solid #fff;border-right:2px solid #8a8a8a;border-bottom:2px solid #8a8a8a"></div>
<svg class="a" style="left:1763px;top:154px;" width="10" height="6" viewBox="0 0 10 6"><path d="M1 5 L5 1 L9 5 Z" fill="#000"/></svg>
<div class="a" style="left:1758px;top:167px;width:21px;height:14px;background:#f0f0f0;border-top:1px solid #fff;border-left:1px solid #fff;border-right:2px solid #8a8a8a;border-bottom:2px solid #8a8a8a"></div>
<svg class="a" style="left:1763px;top:171px;" width="10" height="6" viewBox="0 0 10 6"><path d="M1 1 L5 5 L9 1 Z" fill="#000"/></svg>
<div id="t16" class="t" style="left:1805.5px;top:148.8px;font-size:15px;transform:scaleX(1.1690);">Simulated sensor</div>
<div id="t17" class="t" style="left:1807.6px;top:169.9px;font-size:15px;transform:scaleX(1.1734);">Adaptive</div>
<svg class="a" style="left:1940px;top:170px;" width="16" height="16" viewBox="0 0 16 16"><path d="M1 1 L15 8 L1 15 Z" fill="#6ed84a" stroke="#48b830" stroke-width="1"/></svg>
<svg class="a" style="left:2145px;top:165px;" width="26" height="24" viewBox="0 0 26 24"><defs><linearGradient id="edg" x1="0" y1="0" x2="1" y2="1"><stop offset="0" stop-color="#ffffff"/><stop offset="1" stop-color="#8cc8f4"/></linearGradient></defs><path d="M2.5 4 L14 1.5 L16 2.5 V19.5 L4 22.5 L2.5 21 Z" fill="#3a4450" opacity=".8"/><path d="M1 3.5 L13 1 Q14.5 1 14.5 2.5 V18.5 L2.8 21.2 Q1.2 21.3 1.2 19.8 Z" fill="#2a68c8"/><path d="M3.5 6 L12.5 4.2 V17.2 L3.8 19 Z" fill="url(#edg)"/><path d="M5 12.5 L7.5 16 L11 7" stroke="#d8b040" stroke-width="1.6" fill="none" opacity=".85"/><path d="M12.5 14 L21 10.5" stroke="#7ab0e8" stroke-width="2.4"/><circle cx="22" cy="10" r="1.8" fill="#d04a2a"/></svg>
<div id="t18" class="t" style="left:2190.5px;top:148.8px;font-size:15px;transform:scaleX(1.1112);">DVD manual</div>
<svg class="a" style="left:2308px;top:168px;" width="26" height="24" viewBox="0 0 26 24"><defs><linearGradient id="edg" x1="0" y1="0" x2="1" y2="1"><stop offset="0" stop-color="#ffffff"/><stop offset="1" stop-color="#8cc8f4"/></linearGradient></defs><path d="M2.5 4 L14 1.5 L16 2.5 V19.5 L4 22.5 L2.5 21 Z" fill="#3a4450" opacity=".8"/><path d="M1 3.5 L13 1 Q14.5 1 14.5 2.5 V18.5 L2.8 21.2 Q1.2 21.3 1.2 19.8 Z" fill="#2a68c8"/><path d="M3.5 6 L12.5 4.2 V17.2 L3.8 19 Z" fill="url(#edg)"/><path d="M5 12.5 L7.5 16 L11 7" stroke="#d8b040" stroke-width="1.6" fill="none" opacity=".85"/><path d="M12.5 14 L21 10.5" stroke="#7ab0e8" stroke-width="2.4"/><circle cx="22" cy="10" r="1.8" fill="#d04a2a"/></svg>
<div class="a" style="left:2353px;top:149.5px;width:14px;height:14px;background:#fff;border-top:2px solid #7a7a7a;border-left:2px solid #7a7a7a;border-right:1px solid #e8e8e8;border-bottom:1px solid #e8e8e8"></div>
<div id="t19" class="t" style="left:2376.0px;top:149.5px;font-size:15px;transform:scaleX(1.1413);">Reference</div>
<div class="a" style="left:2353px;top:170.5px;width:14px;height:14px;background:#f0f0f0;border-top:2px solid #7a7a7a;border-left:2px solid #7a7a7a;border-right:1px solid #e8e8e8;border-bottom:1px solid #e8e8e8"></div>
<div id="t20" class="t" style="left:2377.0px;top:170.5px;font-size:15px;transform:scaleX(1.1435);color:#a8a8a8">XYZ Adjustment</div>
<div class="a" style="left:6px;top:203px;width:2418px;height:270px;background:#ebebeb;border:2px solid #7a7a7a;box-shadow:inset 1px 1px 0 #a8a8a8"></div>
<div class="a" style="left:8px;top:205px;width:2414px;height:17px;background:#7a7a7a"></div>
<div class="a" style="left:8px;top:205px;width:2414px;height:17px;background:linear-gradient(90deg,#dde6f2,#e6edf7 40%,#edf2f9);border-radius:6px 6px 0 0"></div>
<div class="a" style="left:8px;top:222px;width:2414px;height:1px;background:#c6c6c6"></div>
<div class="a" style="left:8px;top:223px;width:2414px;height:1px;background:#f4f4f4"></div>
<div id="t21" class="t" style="left:18.0px;top:208.3px;font-size:13px;font-weight:bold;transform:scaleX(1.0563);color:#404040">( Average dE: 1.36 [0.69,0.94,0.30] max: 2.39 [CIE2000] )</div>
<div class="a" style="left:10px;top:221px;width:2395px;height:223px;background:#f0f0f0;border-left:2px solid #8a8a8a;border-top:2px solid #8a8a8a"></div>
<div class="a" style="left:12px;top:223px;width:67px;height:27px;background:#f0f0f0"></div>
<div class="a" style="left:79px;top:223px;width:459px;height:27px;background:#efefef"></div>
<div class="a" style="left:539px;top:223px;width:458px;height:27px;background:#f0c0c0"></div>
<div class="a" style="left:998px;top:223px;width:458px;height:27px;background:#f09090"></div>
<div class="a" style="left:1457px;top:223px;width:457px;height:27px;background:#f06060"></div>
<div class="a" style="left:1915px;top:223px;width:458px;height:27px;background:#f03030"></div>
<div class="a" style="left:12px;top:250px;width:2361px;height:2px;background:#8c8c8c"></div>
<div class="a" style="left:12px;top:252px;width:67px;height:30px;background:#f0f0f0"></div>
<div class="a" style="left:79px;top:252px;width:459px;height:30px;background:#ffffff"></div>
<div class="a" style="left:539px;top:252px;width:458px;height:30px;background:#ffffff"></div>
<div class="a" style="left:998px;top:252px;width:458px;height:30px;background:#ffffff"></div>
<div class="a" style="left:1457px;top:252px;width:457px;height:30px;background:#ffffff"></div>
<div class="a" style="left:1915px;top:252px;width:458px;height:30px;background:#ffffff"></div>
<div class="a" style="left:12px;top:282px;width:67px;height:1.5px;background:#8c8c8c"></div>
<div class="a" style="left:79px;top:282px;width:2294px;height:1px;background:#c4c4c4"></div>
<div class="a" style="left:12px;top:283px;width:67px;height:30px;background:#f0f0f0"></div>
<div class="a" style="left:79px;top:283px;width:459px;height:30px;background:#ffffff"></div>
<div class="a" style="left:539px;top:283px;width:458px;height:30px;background:#ffffff"></div>
<div class="a" style="left:998px;top:283px;width:458px;height:30px;background:#ffffff"></div>
<div class="a" style="left:1457px;top:283px;width:457px;height:30px;background:#ffffff"></div>
<div class="a" style="left:1915px;top:283px;width:458px;height:30px;background:#ffffff"></div>
<div class="a" style="left:12px;top:313px;width:67px;height:1.5px;background:#8c8c8c"></div>
<div class="a" style="left:79px;top:313px;width:2294px;height:1px;background:#c4c4c4"></div>
<div class="a" style="left:12px;top:314px;width:67px;height:30px;background:#f0f0f0"></div>
<div class="a" style="left:79px;top:314px;width:459px;height:30px;background:#ffffff"></div>
<div class="a" style="left:539px;top:314px;width:458px;height:30px;background:#ffffff"></div>
<div class="a" style="left:998px;top:314px;width:458px;height:30px;background:#ffffff"></div>
<div class="a" style="left:1457px;top:314px;width:457px;height:30px;background:#ffffff"></div>
<div class="a" style="left:1915px;top:314px;width:458px;height:30px;background:#ffffff"></div>
<div class="a" style="left:12px;top:344px;width:67px;height:1.5px;background:#8c8c8c"></div>
<div class="a" style="left:79px;top:344px;width:2294px;height:1px;background:#c4c4c4"></div>
<div class="a" style="left:12px;top:345px;width:67px;height:30px;background:#f0f0f0"></div>
<div class="a" style="left:79px;top:345px;width:459px;height:30px;background:#ffffb0"></div>
<div class="a" style="left:539px;top:345px;width:458px;height:30px;background:#b0ffb0"></div>
<div class="a" style="left:998px;top:345px;width:458px;height:30px;background:#b0ffb0"></div>
<div class="a" style="left:1457px;top:345px;width:457px;height:30px;background:#b0ffb0"></div>
<div class="a" style="left:1915px;top:345px;width:458px;height:30px;background:#b0ffb0"></div>
<div class="a" style="left:12px;top:375px;width:67px;height:1.5px;background:#8c8c8c"></div>
<div class="a" style="left:79px;top:375px;width:2294px;height:1px;background:#c4c4c4"></div>
<div class="a" style="left:12px;top:376px;width:67px;height:31px;background:#f0f0f0"></div>
<div class="a" style="left:79px;top:376px;width:459px;height:31px;background:#f0f0f0"></div>
<div class="a" style="left:539px;top:376px;width:458px;height:31px;background:#f0f0f0"></div>
<div class="a" style="left:998px;top:376px;width:458px;height:31px;background:#f0f0f0"></div>
<div class="a" style="left:1457px;top:376px;width:457px;height:31px;background:#f0f0f0"></div>
<div class="a" style="left:1915px;top:376px;width:458px;height:31px;background:#f0f0f0"></div>
<div class="a" style="left:12px;top:407px;width:67px;height:1.5px;background:#8c8c8c"></div>
<div class="a" style="left:79px;top:407px;width:2294px;height:1px;background:#c4c4c4"></div>
<div class="a" style="left:12px;top:408px;width:67px;height:30px;background:#f0f0f0"></div>
<div class="a" style="left:79px;top:408px;width:459px;height:30px;background:#dfdfdf"></div>
<div class="a" style="left:539px;top:408px;width:458px;height:30px;background:#dfdfdf"></div>
<div class="a" style="left:998px;top:408px;width:458px;height:30px;background:#dfdfdf"></div>
<div class="a" style="left:1457px;top:408px;width:457px;height:30px;background:#dfdfdf"></div>
<div class="a" style="left:1915px;top:408px;width:458px;height:30px;background:#dfdfdf"></div>
<div class="a" style="left:12px;top:438px;width:67px;height:1.5px;background:#8c8c8c"></div>
<div class="a" style="left:79px;top:438px;width:2294px;height:1px;background:#c4c4c4"></div>
<div class="a" style="left:12px;top:439px;width:67px;height:4px;background:#f0f0f0"></div>
<div class="a" style="left:79px;top:439px;width:459px;height:4px;background:#f0f0f0"></div>
<div class="a" style="left:539px;top:439px;width:458px;height:4px;background:#f0f0f0"></div>
<div class="a" style="left:998px;top:439px;width:458px;height:4px;background:#f0f0f0"></div>
<div class="a" style="left:1457px;top:439px;width:457px;height:4px;background:#f0f0f0"></div>
<div class="a" style="left:1915px;top:439px;width:458px;height:4px;background:#f0f0f0"></div>
<div class="a" style="left:79px;top:223px;width:2px;height:220px;background:#8c8c8c"></div>
<div class="a" style="left:537px;top:223px;width:2px;height:27px;background:#8c8c8c"></div>
<div class="a" style="left:537px;top:252px;width:1px;height:191px;background:#c8c8c8"></div>
<div class="a" style="left:996px;top:223px;width:2px;height:27px;background:#8c8c8c"></div>
<div class="a" style="left:996px;top:252px;width:1px;height:191px;background:#c8c8c8"></div>
<div class="a" style="left:1455px;top:223px;width:2px;height:27px;background:#8c8c8c"></div>
<div class="a" style="left:1455px;top:252px;width:1px;height:191px;background:#c8c8c8"></div>
<div class="a" style="left:1913px;top:223px;width:2px;height:27px;background:#8c8c8c"></div>
<div class="a" style="left:1913px;top:252px;width:1px;height:191px;background:#c8c8c8"></div>
<div class="a" style="left:2372px;top:223px;width:2px;height:27px;background:#8c8c8c"></div>
<div class="a" style="left:2372px;top:252px;width:1px;height:191px;background:#c8c8c8"></div>
<div class="a" style="left:46.0px;top:229.6px;width:0;height:0"><div class="t" style="left:0;top:0;font-size:16px;font-weight:bold;transform-origin:50% 0;transform:translateX(-50%) scaleX(0.92);">% Sat</div></div>
<div class="a" style="left:308.5px;top:230.7px;width:0;height:0"><div class="t" style="left:0;top:0;font-size:15px;font-weight:bold;transform-origin:50% 0;transform:translateX(-50%) scaleX(0.93);">0</div></div>
<div class="a" style="left:767.5px;top:230.7px;width:0;height:0"><div class="t" style="left:0;top:0;font-size:15px;font-weight:bold;transform-origin:50% 0;transform:translateX(-50%) scaleX(0.93);">25</div></div>
<div class="a" style="left:1226.5px;top:230.7px;width:0;height:0"><div class="t" style="left:0;top:0;font-size:15px;font-weight:bold;transform-origin:50% 0;transform:translateX(-50%) scaleX(0.93);">50</div></div>
<div class="a" style="left:1685.0px;top:230.7px;width:0;height:0"><div class="t" style="left:0;top:0;font-size:15px;font-weight:bold;transform-origin:50% 0;transform:translateX(-50%) scaleX(0.93);">75</div></div>
<div class="a" style="left:2143.5px;top:230.7px;width:0;height:0"><div class="t" style="left:0;top:0;font-size:15px;font-weight:bold;transform-origin:50% 0;transform:translateX(-50%) scaleX(0.93);">100</div></div>
<div class="a" style="left:46.0px;top:258.9px;width:0;height:0"><div class="t" style="left:0;top:0;font-size:16px;font-weight:bold;transform-origin:50% 0;transform:translateX(-50%) scaleX(0.92);">x</div></div>
<div class="t" style="right:2024.0px;top:259.1px;font-size:16.5px;transform-origin:100% 0;transform:scaleX(0.815);">0.3077</div>
<div class="t" style="right:1565.0px;top:259.1px;font-size:16.5px;transform-origin:100% 0;transform:scaleX(0.815);">0.3977</div>
<div class="t" style="right:1106.0px;top:259.1px;font-size:16.5px;transform-origin:100% 0;transform:scaleX(0.815);">0.4869</div>
<div class="t" style="right:648.0px;top:259.1px;font-size:16.5px;transform-origin:100% 0;transform:scaleX(0.815);">0.5622</div>
<div class="t" style="right:189.0px;top:259.1px;font-size:16.5px;transform-origin:100% 0;transform:scaleX(0.815);">0.6469</div>
<div class="a" style="left:46.0px;top:289.8px;width:0;height:0"><div class="t" style="left:0;top:0;font-size:16px;font-weight:bold;transform-origin:50% 0;transform:translateX(-50%) scaleX(0.92);">y</div></div>
<div class="t" style="right:2024.0px;top:290.0px;font-size:16.5px;transform-origin:100% 0;transform:scaleX(0.815);">0.3292</div>
<div class="t" style="right:1565.0px;top:290.0px;font-size:16.5px;transform-origin:100% 0;transform:scaleX(0.815);">0.3288</div>
<div class="t" style="right:1106.0px;top:290.0px;font-size:16.5px;transform-origin:100% 0;transform:scaleX(0.815);">0.3305</div>
<div class="t" style="right:648.0px;top:290.0px;font-size:16.5px;transform-origin:100% 0;transform:scaleX(0.815);">0.3308</div>
<div class="t" style="right:189.0px;top:290.0px;font-size:16.5px;transform-origin:100% 0;transform:scaleX(0.815);">0.3294</div>
<div class="a" style="left:46.0px;top:320.9px;width:0;height:0"><div class="t" style="left:0;top:0;font-size:16px;font-weight:bold;transform-origin:50% 0;transform:translateX(-50%) scaleX(0.92);">Y</div></div>
<div class="t" style="right:2024.0px;top:321.1px;font-size:16.5px;transform-origin:100% 0;transform:scaleX(0.815);">27.313</div>
<div class="t" style="right:1565.0px;top:321.1px;font-size:16.5px;transform-origin:100% 0;transform:scaleX(0.815);">27.269</div>
<div class="t" style="right:1106.0px;top:321.1px;font-size:16.5px;transform-origin:100% 0;transform:scaleX(0.815);">28.006</div>
<div class="t" style="right:648.0px;top:321.1px;font-size:16.5px;transform-origin:100% 0;transform:scaleX(0.815);">30.048</div>
<div class="t" style="right:189.0px;top:321.1px;font-size:16.5px;transform-origin:100% 0;transform:scaleX(0.815);">30.698</div>
<div class="a" style="left:46.0px;top:351.8px;width:0;height:0"><div class="t" style="left:0;top:0;font-size:16px;font-weight:bold;transform-origin:50% 0;transform:translateX(-50%) scaleX(0.92);">Delta E</div></div>
<div class="t" style="right:2024.0px;top:353.2px;font-size:15px;font-weight:bold;transform-origin:100% 0;transform:scaleX(0.93);">2.4</div>
<div class="t" style="right:1565.0px;top:353.2px;font-size:15px;font-weight:bold;transform-origin:100% 0;transform:scaleX(0.93);">1.3</div>
<div class="t" style="right:1106.0px;top:353.2px;font-size:15px;font-weight:bold;transform-origin:100% 0;transform:scaleX(0.93);">1.0</div>
<div class="t" style="right:648.0px;top:353.2px;font-size:15px;font-weight:bold;transform-origin:100% 0;transform:scaleX(0.93);">0.8</div>
<div class="t" style="right:189.0px;top:353.2px;font-size:15px;font-weight:bold;transform-origin:100% 0;transform:scaleX(0.93);">1.3</div>
<div class="a" style="left:46.0px;top:383.0px;width:0;height:0"><div class="t" style="left:0;top:0;font-size:16px;font-weight:bold;transform-origin:50% 0;transform:translateX(-50%) scaleX(0.92);">delta xy</div></div>
<div class="t" style="right:2024.0px;top:383.2px;font-size:16.5px;transform-origin:100% 0;transform:scaleX(0.815);">0.0050</div>
<div class="t" style="right:1565.0px;top:383.2px;font-size:16.5px;transform-origin:100% 0;transform:scaleX(0.815);">0.0047</div>
<div class="t" style="right:1106.0px;top:383.2px;font-size:16.5px;transform-origin:100% 0;transform:scaleX(0.815);">0.0029</div>
<div class="t" style="right:648.0px;top:383.2px;font-size:16.5px;transform-origin:100% 0;transform:scaleX(0.815);">0.0100</div>
<div class="t" style="right:189.0px;top:383.2px;font-size:16.5px;transform-origin:100% 0;transform:scaleX(0.815);">0.0069</div>
<div class="a" style="left:46.0px;top:414.1px;width:0;height:0"><div class="t" style="left:0;top:0;font-size:16px;font-weight:bold;transform-origin:50% 0;transform:translateX(-50%) scaleX(0.92);">delta L</div></div>
<div class="t" style="right:2024.0px;top:414.3px;font-size:16.5px;transform-origin:100% 0;transform:scaleX(0.815);">-2.8 %</div>
<div class="t" style="right:1565.0px;top:414.3px;font-size:16.5px;transform-origin:100% 0;transform:scaleX(0.815);">-4.5 %</div>
<div class="t" style="right:1106.0px;top:414.3px;font-size:16.5px;transform-origin:100% 0;transform:scaleX(0.815);">-3.9 %</div>
<div class="t" style="right:648.0px;top:414.3px;font-size:16.5px;transform-origin:100% 0;transform:scaleX(0.815);">+0.5 %</div>
<div class="t" style="right:189.0px;top:414.3px;font-size:16.5px;transform-origin:100% 0;transform:scaleX(0.815);">-3.7 %</div>
<div class="a" style="left:2385px;top:244px;width:2px;height:176px;background:#8a8a8a"></div>
<svg class="a" style="left:17px;top:450px;" width="8" height="11" viewBox="0 0 8 11"><path d="M7 0 V10 L1 5 Z" fill="#a8a8a8"/></svg>
<svg class="a" style="left:2360px;top:450px;" width="8" height="11" viewBox="0 0 8 11"><path d="M1 0 V10 L7 5 Z" fill="#a8a8a8"/></svg>
<div class="a" style="left:8px;top:224px;width:1.6px;height:248px;background:#22dd22"></div>
<div class="a" style="left:8px;top:470px;width:2412px;height:2px;background:#33dd33"></div>
<div class="a" style="left:2418px;top:206px;width:2px;height:266px;background:#22dd22"></div>
<div class="a" style="left:2405px;top:224px;width:15px;height:1.6px;background:#22dd22"></div>
<svg class="a" style="left:7px;top:205px;" width="14" height="20" viewBox="0 0 14 20"><path d="M1.5 19 V10 Q1.5 1.5 10 1.5 H13" fill="none" stroke="#22dd22" stroke-width="1.5" stroke-dasharray="3 4"/></svg>
<div class="a" style="left:2429px;top:203px;width:100px;height:123px;background:#ebebeb;border:2px solid #7a7a7a;box-shadow:inset 1px 1px 0 #a8a8a8"></div>
<div class="a" style="left:2431px;top:205px;width:96px;height:21px;background:#7a7a7a"></div>
<div class="a" style="left:2431px;top:205px;width:96px;height:21px;background:linear-gradient(90deg,#dde6f2,#e6edf7 40%,#edf2f9);border-radius:6px 6px 0 0"></div>
<div class="a" style="left:2431px;top:226px;width:96px;height:1px;background:#c6c6c6"></div>
<div class="a" style="left:2431px;top:227px;width:96px;height:1px;background:#f4f4f4"></div>
<div id="t22" class="t" style="left:2437.6px;top:209.4px;font-size:14px;font-weight:bold;transform:scaleX(1.1925);color:#3c3c3c">Display</div>
<div class="a" style="left:2438px;top:226px;width:72px;height:19px;background:#efefef"></div>
<svg class="a" style="left:2440px;top:227px;" width="14" height="14" viewBox="0 0 14 14"><circle cx="6.5" cy="6.5" r="5.5" fill="#f0f0f0"/><path d="M2.3 10.2 A5.5 5.5 0 0 1 10.2 2.3" fill="none" stroke="#a0a0a0" stroke-width="1.3"/></svg>
<div id="t23" class="t" style="left:2461.0px;top:228.5px;font-size:15px;color:#a0a0a0">Sensor</div>
<div class="a" style="left:2438px;top:246px;width:72px;height:19px;background:#efefef"></div>
<svg class="a" style="left:2440px;top:247px;" width="14" height="14" viewBox="0 0 14 14"><circle cx="6.5" cy="6.5" r="5.5" fill="#fff"/><path d="M2.3 10.2 A5.5 5.5 0 0 1 10.2 2.3" fill="none" stroke="#555" stroke-width="1.3"/></svg>
<div id="t24" class="t" style="left:2461.0px;top:248.5px;font-size:15px;color:#000">RGB</div>
<div class="a" style="left:2438px;top:266px;width:72px;height:19px;background:#efefef"></div>
<svg class="a" style="left:2440px;top:267px;" width="14" height="14" viewBox="0 0 14 14"><circle cx="6.5" cy="6.5" r="5.5" fill="#fff"/><path d="M2.3 10.2 A5.5 5.5 0 0 1 10.2 2.3" fill="none" stroke="#555" stroke-width="1.3"/></svg>
<div id="t25" class="t" style="left:2461.0px;top:268.5px;font-size:15px;color:#000">XYZ</div>
<div class="a" style="left:2438px;top:286px;width:72px;height:19px;background:#efefef"></div>
<svg class="a" style="left:2440px;top:287px;" width="14" height="14" viewBox="0 0 14 14"><circle cx="6.5" cy="6.5" r="5.5" fill="#fff"/><path d="M2.3 10.2 A5.5 5.5 0 0 1 10.2 2.3" fill="none" stroke="#555" stroke-width="1.3"/></svg>
<div id="t26" class="t" style="left:2461.0px;top:288.5px;font-size:15px;color:#000">xyz</div>
<div class="a" style="left:2438px;top:304px;width:72px;height:19px;background:#efefef"></div>
<svg class="a" style="left:2440px;top:305px;" width="14" height="14" viewBox="0 0 14 14"><circle cx="6.5" cy="6.5" r="5.5" fill="#fff"/><path d="M2.3 10.2 A5.5 5.5 0 0 1 10.2 2.3" fill="none" stroke="#555" stroke-width="1.3"/><circle cx="6.5" cy="6.5" r="2.2" fill="#000"/></svg>
<div id="t27" class="t" style="left:2461.0px;top:306.5px;font-size:15px;color:#000">xyY</div>
<div class="a" style="left:2425px;top:326px;width:110px;height:148px;background:#8a8a8a"></div>
<div class="a" style="left:2425px;top:331px;width:103px;height:37px;background:#ececec;border-top:1px solid #fafafa;border-left:1px solid #f4f4f4;border-bottom:1px solid #d8d8d8"></div>
<div id="t28" class="t" style="left:2489.0px;top:344.1px;font-size:16px;transform:scaleX(0.9839);">Go</div>
<div class="a" style="left:2425px;top:368px;width:103px;height:37px;background:#ececec;border-top:1px solid #fafafa;border-left:1px solid #f4f4f4;border-bottom:1px solid #d8d8d8"></div>
<div id="t29" class="t" style="left:2474.0px;top:379.7px;font-size:16px;transform:scaleX(1.0811);">Delete</div>
<div class="a" style="left:2425px;top:405px;width:103px;height:37px;background:#ececec;border-top:1px solid #fafafa;border-left:1px solid #f4f4f4;border-bottom:1px solid #d8d8d8"></div>
<div id="t30" class="t" style="left:2483.0px;top:416.7px;font-size:16px;transform:scaleX(1.0028);">Refs</div>
<svg class="a" style="left:2432px;top:334px;" width="42" height="33" viewBox="0 0 42 33"><path d="M2 2 V31 M4 2 V31" stroke="#222" stroke-width="1" stroke-dasharray="1.5 1.5"/><path d="M38 5 V33 M40 5 V33" stroke="#222" stroke-width="1" stroke-dasharray="1.5 1.5"/><path d="M3 2 H16 Q10 16 24 32 H38 V4 H28 Z" fill="#b8b8b8" stroke="#333" stroke-width=".8"/><path d="M10 2 H26 Q22 14 36 30 L28 32 Q14 18 10 2 Z" fill="#e8102a" stroke="#300" stroke-width="1"/><path d="M12 9 L25 8 M15 17 L28 16 M20 24 L33 23" stroke="#300" stroke-width="1.4"/><path d="M7 8 h4 v4 h-4 Z M7 18 h4 v4 h-4 Z M30 12 h4 v4 h-4 Z M30 22 h4 v4 h-4 Z" fill="#eee" stroke="#444" stroke-width=".6"/></svg>
<svg class="a" style="left:2434px;top:370px;" width="36" height="34" viewBox="0 0 36 34"><defs><linearGradient id="binb" x1="0" y1="0" x2="1" y2="1"><stop offset="0" stop-color="#e8fbff"/><stop offset="1" stop-color="#5aa8e0"/></linearGradient></defs><path d="M2 5 Q18 -1 35 3 L31 30 Q18 35 6 31 Z" fill="url(#binb)" stroke="#7ab8e0" stroke-width="1"/><ellipse cx="19" cy="27" rx="11" ry="3.5" fill="none" stroke="#9cd0f0" stroke-width="1"/><path d="M16 20 A6 6 0 0 1 26 11 L27 8 L29 15 L23 15 L25 13 A4 4 0 0 0 18 19 Z" fill="#1a9a2a"/><path d="M28 15 A6 6 0 0 1 17 24 L16 27 L14 20 L20 20 L18 22 A4 4 0 0 0 25 17 Z" fill="#1a9a2a"/></svg>
<svg class="a" style="left:2432px;top:411px;" width="42" height="29" viewBox="0 0 42 29"><path d="M0 13 L4 11 L6 5 L9 0 L12 5 L16 3 L18 10 L22 12 L26 7 L29 2 L32 0 L36 4 L38 12 L42 9 V29 H0 Z" fill="#ffff00"/><rect x="0" y="15" width="3" height="14" fill="#000080"/><rect x="3" y="12" width="2.5" height="17" fill="#ff00ff"/><rect x="5.5" y="4" width="5" height="25" fill="#0000ff"/><rect x="10.5" y="9" width="4" height="20" fill="#00ffff"/><rect x="14.5" y="12" width="5" height="17" fill="#00ff00"/><rect x="19.5" y="4" width="7" height="25" fill="#ffff00"/><rect x="26.5" y="6" width="4.5" height="23" fill="#800000"/><rect x="31" y="12" width="11" height="17" fill="#ff0000"/></svg>
<div class="a" style="left:2432px;top:448px;width:71px;height:22px;background:#efefef"></div>
<div class="a" style="left:2434px;top:451.5px;width:14px;height:14px;background:#fff;border-top:2px solid #7a7a7a;border-left:2px solid #7a7a7a;border-right:1px solid #e8e8e8;border-bottom:1px solid #e8e8e8"></div>
<div id="t31" class="t" style="left:2456.0px;top:450.7px;font-size:16px;transform:scaleX(1.0516);">Edit</div>
<div class="a" style="left:6px;top:484px;width:473px;height:876px;background:#ebebeb;border:2px solid #7a7a7a;box-shadow:inset 1px 1px 0 #a8a8a8"></div>
<div class="a" style="left:8px;top:486px;width:469px;height:21px;background:#7a7a7a"></div>
<div class="a" style="left:8px;top:486px;width:469px;height:21px;background:linear-gradient(90deg,#dde6f2,#e6edf7 40%,#edf2f9);border-radius:6px 6px 0 0"></div>
<div class="a" style="left:8px;top:507px;width:469px;height:1px;background:#c6c6c6"></div>
<div class="a" style="left:8px;top:508px;width:469px;height:1px;background:#f4f4f4"></div>
<div id="t32" class="t" style="left:15.0px;top:490.0px;font-size:14px;font-weight:bold;transform:scaleX(1.2184);color:#3c3c3c">Selected color</div>
<div class="a" style="left:21px;top:512px;width:139px;height:17px;background:#efefef"></div>
<div id="t33" class="t" style="left:22.5px;top:514.3px;font-size:15px;transform:scaleX(1.0744);">RGB Levels</div>
<div class="a" style="left:287px;top:510px;width:152px;height:20px;background:#efefef"></div>
<div id="t34" class="t" style="left:301.0px;top:512.0px;font-size:15px;transform:scaleX(1.1773);">Current Measure</div>
<div class="a" style="left:17px;top:541px;width:250px;height:110px;background:#f0f0f0"></div>
<svg class="a" style="left:17px;top:596px;" width="250" height="3" viewBox="0 0 250 3"><line x1="0" y1="1.5" x2="250" y2="1.5" stroke="#8a8a8a" stroke-dasharray="4.4 3" stroke-width="1.2"/></svg>
<div id="t35" class="t" style="left:28.0px;top:617.0px;font-size:18px;font-family:'Liberation Serif',serif;transform:scaleX(1.0933);color:#000;-webkit-text-stroke:0.3px #000">0.0%</div>
<div id="t36" class="t" style="left:91.0px;top:617.0px;font-size:18px;font-family:'Liberation Serif',serif;transform:scaleX(1.0933);color:#000;-webkit-text-stroke:0.3px #000">0.0%</div>
<div id="t37" class="t" style="left:155.0px;top:617.0px;font-size:18px;font-family:'Liberation Serif',serif;transform:scaleX(1.0933);color:#000;-webkit-text-stroke:0.3px #000">0.0%</div>
<div id="t38" class="t" style="left:213.0px;top:617.0px;font-size:18px;font-family:'Liberation Serif',serif;transform:scaleX(1.1489);color:#000;-webkit-text-stroke:0.3px #000">dE 0.0</div>
<svg class="a" style="left:17px;top:636px;" width="250" height="14" viewBox="0 0 250 14"><rect x="0" y="6.5" width="250" height="6.5" fill="#000"/><path d="M1 7 Q33.5 -3.5 66 7 Z" fill="#a00000" stroke="#000" stroke-width="1"/><path d="M67 7 Q99.0 -3.5 131 7 Z" fill="#00a000" stroke="#000" stroke-width="1"/><path d="M131 7 Q163.5 -3.5 196 7 Z" fill="#0000a0" stroke="#000" stroke-width="1"/><path d="M195 7 Q222.5 -3.5 250 7 Z" fill="#b8860b" stroke="#000" stroke-width="1"/></svg>
<div class="a" style="left:20px;top:667px;width:240px;height:92px;background:#efefef"></div>
<div id="t39" class="t" style="left:44.0px;top:670.0px;font-size:16px;font-weight:bold;transform:scaleX(1.0782);color:#111">Measure</div>
<div id="t40" class="t" style="left:159.0px;top:670.0px;font-size:16px;font-weight:bold;transform:scaleX(1.0468);color:#111">Reference</div>
<div id="t41" class="t" style="left:22.5px;top:780.8px;font-size:15px;transform:scaleX(1.1870);">Target</div>
<div class="a" style="left:62px;top:798px;width:146px;height:112px;border:1px solid #000;background:conic-gradient(from 0deg at 50% 50%,#40ff00 0deg,#c8d000 35deg,#ffb000 52deg,#ff3000 75deg,#ff0000 90deg,#ff0040 110deg,#ff0090 128deg,#a000b0 165deg,#7000d0 180deg,#3000f0 215deg,#0000ff 232deg,#0060c0 255deg,#00a0a0 270deg,#00d090 295deg,#00ff80 308deg,#20ff40 335deg,#40ff00 360deg)"></div>
<svg class="a" style="left:62px;top:798px;" width="146" height="112" viewBox="0 0 146 112"><rect x="22.5" y="16.5" width="101" height="78" rx="10" fill="#000" stroke="#fff" stroke-width="1"/>
<line x1="19" y1="55.5" x2="128" y2="55.5" stroke="#fff" stroke-dasharray="4 3" shape-rendering="crispEdges"/>
<line x1="73.5" y1="16" x2="73.5" y2="95" stroke="#fff" stroke-dasharray="4 3" shape-rendering="crispEdges"/>
<ellipse cx="73" cy="54" rx="26.5" ry="19.7" fill="none" stroke="#fff" stroke-dasharray="4 3"/></svg>
<div class="a" style="left:276px;top:539px;width:191px;height:692px;background:#a0a0a0;border-left:2px solid #808080;border-top:2px solid #808080"></div>
<div class="a" style="left:443px;top:541px;width:24px;height:809px;background:#f0f0f0;border-right:1px solid #fafafa"></div>
<div class="a" style="left:276px;top:1230px;width:167px;height:120px;background:#a0a0a0;border-left:2px solid #808080"></div>
<svg class="a" style="left:450px;top:547px;" width="12" height="9" viewBox="0 0 12 9"><path d="M0 8 L5.5 1 L11 8 Z" fill="#a6a6a6"/></svg>
<svg class="a" style="left:450px;top:1335px;" width="12" height="9" viewBox="0 0 12 9"><path d="M0 1 L5.5 8 L11 1 Z" fill="#a6a6a6"/></svg>
<div class="a" style="left:278px;top:540.0px;width:64px;height:28.75px;background:#f0f0f0"></div>
<div class="a" style="left:344px;top:540.0px;width:99px;height:28.75px;background:#ffffff"></div>
<div class="a" style="left:278px;top:567.75px;width:64px;height:1.5px;background:#808080"></div>
<div class="a" style="left:344px;top:567.75px;width:99px;height:1px;background:#c8c8c8"></div>
<div class="a" style="left:310.5px;top:546.3px;width:0;height:0"><div class="t" style="left:0;top:0;font-size:16px;font-weight:bold;transform-origin:50% 0;transform:translateX(-50%) scaleX(0.95);">Y cd/m&#178;</div></div>
<div class="a" style="left:278px;top:568.75px;width:64px;height:28.75px;background:#f0f0f0"></div>
<div class="a" style="left:344px;top:568.75px;width:99px;height:28.75px;background:#ffffff"></div>
<div class="a" style="left:278px;top:596.5px;width:64px;height:1.5px;background:#808080"></div>
<div class="a" style="left:344px;top:596.5px;width:99px;height:1px;background:#c8c8c8"></div>
<div class="a" style="left:310.5px;top:575.1px;width:0;height:0"><div class="t" style="left:0;top:0;font-size:16px;font-weight:bold;transform-origin:50% 0;transform:translateX(-50%) scaleX(0.95);">Y ftL</div></div>
<div class="a" style="left:278px;top:597.5px;width:64px;height:28.75px;background:#f0f0f0"></div>
<div class="a" style="left:344px;top:597.5px;width:99px;height:28.75px;background:#ffffff"></div>
<div class="a" style="left:278px;top:625.25px;width:64px;height:1.5px;background:#808080"></div>
<div class="a" style="left:344px;top:625.25px;width:99px;height:1px;background:#c8c8c8"></div>
<div class="a" style="left:310.5px;top:603.8px;width:0;height:0"><div class="t" style="left:0;top:0;font-size:16px;font-weight:bold;transform-origin:50% 0;transform:translateX(-50%) scaleX(0.95);">T&#176;</div></div>
<div class="a" style="left:278px;top:626.25px;width:64px;height:28.75px;background:#f0f0f0"></div>
<div class="a" style="left:344px;top:626.25px;width:99px;height:28.75px;background:#e0e0e0"></div>
<div class="a" style="left:278px;top:654.0px;width:64px;height:1.5px;background:#808080"></div>
<div class="a" style="left:344px;top:654.0px;width:99px;height:1px;background:#c8c8c8"></div>
<div class="a" style="left:310.5px;top:632.6px;width:0;height:0"><div class="t" style="left:0;top:0;font-size:16px;font-weight:bold;transform-origin:50% 0;transform:translateX(-50%) scaleX(0.95);">X</div></div>
<div class="a" style="left:278px;top:655.0px;width:64px;height:28.75px;background:#f0f0f0"></div>
<div class="a" style="left:344px;top:655.0px;width:99px;height:28.75px;background:#e0e0e0"></div>
<div class="a" style="left:278px;top:682.75px;width:64px;height:1.5px;background:#808080"></div>
<div class="a" style="left:344px;top:682.75px;width:99px;height:1px;background:#c8c8c8"></div>
<div class="a" style="left:310.5px;top:661.3px;width:0;height:0"><div class="t" style="left:0;top:0;font-size:16px;font-weight:bold;transform-origin:50% 0;transform:translateX(-50%) scaleX(0.95);">Y</div></div>
<div class="a" style="left:278px;top:683.75px;width:64px;height:28.75px;background:#f0f0f0"></div>
<div class="a" style="left:344px;top:683.75px;width:99px;height:28.75px;background:#e0e0e0"></div>
<div class="a" style="left:278px;top:711.5px;width:64px;height:1.5px;background:#808080"></div>
<div class="a" style="left:344px;top:711.5px;width:99px;height:1px;background:#c8c8c8"></div>
<div class="a" style="left:310.5px;top:690.1px;width:0;height:0"><div class="t" style="left:0;top:0;font-size:16px;font-weight:bold;transform-origin:50% 0;transform:translateX(-50%) scaleX(0.95);">Z</div></div>
<div class="a" style="left:278px;top:712.5px;width:64px;height:28.75px;background:#f0f0f0"></div>
<div class="a" style="left:344px;top:712.5px;width:99px;height:28.75px;background:#ffffff"></div>
<div class="a" style="left:278px;top:740.25px;width:64px;height:1.5px;background:#808080"></div>
<div class="a" style="left:344px;top:740.25px;width:99px;height:1px;background:#c8c8c8"></div>
<div class="a" style="left:310.5px;top:718.8px;width:0;height:0"><div class="t" style="left:0;top:0;font-size:16px;font-weight:bold;transform-origin:50% 0;transform:translateX(-50%) scaleX(0.95);">R</div></div>
<div class="a" style="left:278px;top:741.25px;width:64px;height:28.75px;background:#f0f0f0"></div>
<div class="a" style="left:344px;top:741.25px;width:99px;height:28.75px;background:#ffffff"></div>
<div class="a" style="left:278px;top:769.0px;width:64px;height:1.5px;background:#808080"></div>
<div class="a" style="left:344px;top:769.0px;width:99px;height:1px;background:#c8c8c8"></div>
<div class="a" style="left:310.5px;top:747.6px;width:0;height:0"><div class="t" style="left:0;top:0;font-size:16px;font-weight:bold;transform-origin:50% 0;transform:translateX(-50%) scaleX(0.95);">G</div></div>
<div class="a" style="left:278px;top:770.0px;width:64px;height:28.75px;background:#f0f0f0"></div>
<div class="a" style="left:344px;top:770.0px;width:99px;height:28.75px;background:#ffffff"></div>
<div class="a" style="left:278px;top:797.75px;width:64px;height:1.5px;background:#808080"></div>
<div class="a" style="left:344px;top:797.75px;width:99px;height:1px;background:#c8c8c8"></div>
<div class="a" style="left:310.5px;top:776.3px;width:0;height:0"><div class="t" style="left:0;top:0;font-size:16px;font-weight:bold;transform-origin:50% 0;transform:translateX(-50%) scaleX(0.95);">B</div></div>
<div class="a" style="left:278px;top:798.75px;width:64px;height:28.75px;background:#f0f0f0"></div>
<div class="a" style="left:344px;top:798.75px;width:99px;height:28.75px;background:#e0e0e0"></div>
<div class="a" style="left:278px;top:826.5px;width:64px;height:1.5px;background:#808080"></div>
<div class="a" style="left:344px;top:826.5px;width:99px;height:1px;background:#c8c8c8"></div>
<div class="a" style="left:310.5px;top:805.1px;width:0;height:0"><div class="t" style="left:0;top:0;font-size:16px;font-weight:bold;transform-origin:50% 0;transform:translateX(-50%) scaleX(0.95);">x</div></div>
<div class="a" style="left:278px;top:827.5px;width:64px;height:28.75px;background:#f0f0f0"></div>
<div class="a" style="left:344px;top:827.5px;width:99px;height:28.75px;background:#e0e0e0"></div>
<div class="a" style="left:278px;top:855.25px;width:64px;height:1.5px;background:#808080"></div>
<div class="a" style="left:344px;top:855.25px;width:99px;height:1px;background:#c8c8c8"></div>
<div class="a" style="left:310.5px;top:833.8px;width:0;height:0"><div class="t" style="left:0;top:0;font-size:16px;font-weight:bold;transform-origin:50% 0;transform:translateX(-50%) scaleX(0.95);">y</div></div>
<div class="a" style="left:278px;top:856.25px;width:64px;height:28.75px;background:#f0f0f0"></div>
<div class="a" style="left:344px;top:856.25px;width:99px;height:28.75px;background:#e0e0e0"></div>
<div class="a" style="left:278px;top:884.0px;width:64px;height:1.5px;background:#808080"></div>
<div class="a" style="left:344px;top:884.0px;width:99px;height:1px;background:#c8c8c8"></div>
<div class="a" style="left:310.5px;top:862.6px;width:0;height:0"><div class="t" style="left:0;top:0;font-size:16px;font-weight:bold;transform-origin:50% 0;transform:translateX(-50%) scaleX(0.95);">Y</div></div>
<div class="a" style="left:278px;top:885.0px;width:64px;height:28.75px;background:#f0f0f0"></div>
<div class="a" style="left:344px;top:885.0px;width:99px;height:28.75px;background:#ffffff"></div>
<div class="a" style="left:278px;top:912.75px;width:64px;height:1.5px;background:#808080"></div>
<div class="a" style="left:344px;top:912.75px;width:99px;height:1px;background:#c8c8c8"></div>
<div class="a" style="left:310.5px;top:891.3px;width:0;height:0"><div class="t" style="left:0;top:0;font-size:16px;font-weight:bold;transform-origin:50% 0;transform:translateX(-50%) scaleX(0.95);">x</div></div>
<div class="a" style="left:278px;top:913.75px;width:64px;height:28.75px;background:#f0f0f0"></div>
<div class="a" style="left:344px;top:913.75px;width:99px;height:28.75px;background:#ffffff"></div>
<div class="a" style="left:278px;top:941.5px;width:64px;height:1.5px;background:#808080"></div>
<div class="a" style="left:344px;top:941.5px;width:99px;height:1px;background:#c8c8c8"></div>
<div class="a" style="left:310.5px;top:920.1px;width:0;height:0"><div class="t" style="left:0;top:0;font-size:16px;font-weight:bold;transform-origin:50% 0;transform:translateX(-50%) scaleX(0.95);">y</div></div>
<div class="a" style="left:278px;top:942.5px;width:64px;height:28.75px;background:#f0f0f0"></div>
<div class="a" style="left:344px;top:942.5px;width:99px;height:28.75px;background:#ffffff"></div>
<div class="a" style="left:278px;top:970.25px;width:64px;height:1.5px;background:#808080"></div>
<div class="a" style="left:344px;top:970.25px;width:99px;height:1px;background:#c8c8c8"></div>
<div class="a" style="left:310.5px;top:948.8px;width:0;height:0"><div class="t" style="left:0;top:0;font-size:16px;font-weight:bold;transform-origin:50% 0;transform:translateX(-50%) scaleX(0.95);">z</div></div>
<div class="a" style="left:278px;top:971.25px;width:64px;height:28.75px;background:#f0f0f0"></div>
<div class="a" style="left:344px;top:971.25px;width:99px;height:28.75px;background:#e0e0e0"></div>
<div class="a" style="left:278px;top:999.0px;width:64px;height:1.5px;background:#808080"></div>
<div class="a" style="left:344px;top:999.0px;width:99px;height:1px;background:#c8c8c8"></div>
<div class="a" style="left:310.5px;top:977.6px;width:0;height:0"><div class="t" style="left:0;top:0;font-size:16px;font-weight:bold;transform-origin:50% 0;transform:translateX(-50%) scaleX(0.95);">L</div></div>
<div class="a" style="left:278px;top:1000.0px;width:64px;height:28.75px;background:#f0f0f0"></div>
<div class="a" style="left:344px;top:1000.0px;width:99px;height:28.75px;background:#e0e0e0"></div>
<div class="a" style="left:278px;top:1027.75px;width:64px;height:1.5px;background:#808080"></div>
<div class="a" style="left:344px;top:1027.75px;width:99px;height:1px;background:#c8c8c8"></div>
<div class="a" style="left:310.5px;top:1006.3px;width:0;height:0"><div class="t" style="left:0;top:0;font-size:16px;font-weight:bold;transform-origin:50% 0;transform:translateX(-50%) scaleX(0.95);">a</div></div>
<div class="a" style="left:278px;top:1028.75px;width:64px;height:28.75px;background:#f0f0f0"></div>
<div class="a" style="left:344px;top:1028.75px;width:99px;height:28.75px;background:#e0e0e0"></div>
<div class="a" style="left:278px;top:1056.5px;width:64px;height:1.5px;background:#808080"></div>
<div class="a" style="left:344px;top:1056.5px;width:99px;height:1px;background:#c8c8c8"></div>
<div class="a" style="left:310.5px;top:1035.1px;width:0;height:0"><div class="t" style="left:0;top:0;font-size:16px;font-weight:bold;transform-origin:50% 0;transform:translateX(-50%) scaleX(0.95);">b</div></div>
<div class="a" style="left:278px;top:1057.5px;width:64px;height:28.75px;background:#f0f0f0"></div>
<div class="a" style="left:344px;top:1057.5px;width:99px;height:28.75px;background:#ffffff"></div>
<div class="a" style="left:278px;top:1085.25px;width:64px;height:1.5px;background:#808080"></div>
<div class="a" style="left:344px;top:1085.25px;width:99px;height:1px;background:#c8c8c8"></div>
<div class="a" style="left:310.5px;top:1063.8px;width:0;height:0"><div class="t" style="left:0;top:0;font-size:16px;font-weight:bold;transform-origin:50% 0;transform:translateX(-50%) scaleX(0.95);">L</div></div>
<div class="a" style="left:278px;top:1086.25px;width:64px;height:28.75px;background:#f0f0f0"></div>
<div class="a" style="left:344px;top:1086.25px;width:99px;height:28.75px;background:#ffffff"></div>
<div class="a" style="left:278px;top:1114.0px;width:64px;height:1.5px;background:#808080"></div>
<div class="a" style="left:344px;top:1114.0px;width:99px;height:1px;background:#c8c8c8"></div>
<div class="a" style="left:310.5px;top:1092.6px;width:0;height:0"><div class="t" style="left:0;top:0;font-size:16px;font-weight:bold;transform-origin:50% 0;transform:translateX(-50%) scaleX(0.95);">C</div></div>
<div class="a" style="left:278px;top:1115.0px;width:64px;height:28.75px;background:#f0f0f0"></div>
<div class="a" style="left:344px;top:1115.0px;width:99px;height:28.75px;background:#ffffff"></div>
<div class="a" style="left:278px;top:1142.75px;width:64px;height:1.5px;background:#808080"></div>
<div class="a" style="left:344px;top:1142.75px;width:99px;height:1px;background:#c8c8c8"></div>
<div class="a" style="left:310.5px;top:1121.3px;width:0;height:0"><div class="t" style="left:0;top:0;font-size:16px;font-weight:bold;transform-origin:50% 0;transform:translateX(-50%) scaleX(0.95);">H</div></div>
<div class="a" style="left:278px;top:1143.75px;width:64px;height:28.75px;background:#f0f0f0"></div>
<div class="a" style="left:344px;top:1143.75px;width:99px;height:28.75px;background:#e0e0e0"></div>
<div class="a" style="left:278px;top:1171.5px;width:64px;height:1.5px;background:#808080"></div>
<div class="a" style="left:344px;top:1171.5px;width:99px;height:1px;background:#c8c8c8"></div>
<div class="a" style="left:310.5px;top:1150.1px;width:0;height:0"><div class="t" style="left:0;top:0;font-size:16px;font-weight:bold;transform-origin:50% 0;transform:translateX(-50%) scaleX(0.95);">L</div></div>
<div class="a" style="left:278px;top:1172.5px;width:64px;height:28.75px;background:#f0f0f0"></div>
<div class="a" style="left:344px;top:1172.5px;width:99px;height:28.75px;background:#e0e0e0"></div>
<div class="a" style="left:278px;top:1200.25px;width:64px;height:1.5px;background:#808080"></div>
<div class="a" style="left:344px;top:1200.25px;width:99px;height:1px;background:#c8c8c8"></div>
<div class="a" style="left:310.5px;top:1178.8px;width:0;height:0"><div class="t" style="left:0;top:0;font-size:16px;font-weight:bold;transform-origin:50% 0;transform:translateX(-50%) scaleX(0.95);">M</div></div>
<div class="a" style="left:278px;top:1201.25px;width:64px;height:28.75px;background:#f0f0f0"></div>
<div class="a" style="left:344px;top:1201.25px;width:99px;height:28.75px;background:#e0e0e0"></div>
<div class="a" style="left:278px;top:1229.0px;width:64px;height:1.5px;background:#808080"></div>
<div class="a" style="left:344px;top:1229.0px;width:99px;height:1px;background:#c8c8c8"></div>
<div class="a" style="left:310.5px;top:1207.6px;width:0;height:0"><div class="t" style="left:0;top:0;font-size:16px;font-weight:bold;transform-origin:50% 0;transform:translateX(-50%) scaleX(0.95);">S</div></div>
<div class="a" style="left:342px;top:540px;width:2px;height:690px;background:#808080"></div>
<div class="a" style="left:489px;top:484px;width:2040px;height:876px;background:#ebebeb;border:2px solid #7a7a7a;box-shadow:inset 1px 1px 0 #a8a8a8"></div>
<div class="a" style="left:491px;top:486px;width:2036px;height:21px;background:#7a7a7a"></div>
<div class="a" style="left:491px;top:486px;width:2036px;height:21px;background:linear-gradient(90deg,#dde6f2,#e6edf7 40%,#edf2f9);border-radius:6px 6px 0 0"></div>
<div class="a" style="left:491px;top:507px;width:2036px;height:1px;background:#c6c6c6"></div>
<div class="a" style="left:491px;top:508px;width:2036px;height:1px;background:#f4f4f4"></div>
<div id="t42" class="t" style="left:498.0px;top:490.2px;font-size:14px;font-weight:bold;transform:scaleX(1.2468);color:#3c3c3c">Information</div>
<div class="a" style="left:495px;top:512px;width:377px;height:27px;background:#fff;border-top:3px solid #767676;border-left:3px solid #767676;border-bottom:1px solid #f4f4f4;border-right:1px solid #f4f4f4"></div>
<div class="a" style="left:851px;top:515px;width:19px;height:23px;background:#ececec;border-right:2px solid #7a7a7a;border-bottom:3px solid #7a7a7a;border-top:1px solid #fff;border-left:1px solid #fff"></div>
<svg class="a" style="left:856px;top:522.5px;" width="10" height="6" viewBox="0 0 10 6"><path d="M0 0 H9 L4.5 5 Z" fill="#000"/></svg>
<div id="t43" class="t" style="left:501.0px;top:519.5px;font-size:16px;transform:scaleX(1.0576);">Luminance - Gamma</div>
<div class="a" style="left:497px;top:549px;width:1015px;height:802px;background:#f4f4f4;border-top:3px solid #7a7a7a;border-left:3px solid #7a7a7a;border-right:2px solid #fafafa;border-bottom:2px solid #fafafa;box-shadow:inset 1px 1px 0 #a0a0a0"></div>
<div class="a" style="left:1512px;top:549px;width:1015px;height:802px;background:#f4f4f4;border-top:3px solid #7a7a7a;border-left:3px solid #7a7a7a;border-right:2px solid #fafafa;border-bottom:2px solid #fafafa;box-shadow:inset 1px 1px 0 #a0a0a0"></div>
<div class="a" style="left:0;top:0;width:2560px;height:1440px;clip-path:inset(553.75px 1051.4px 92.70000000000005px 502px)">
<svg class="a" style="left:502px;top:553.75px;overflow:hidden" width="1006.6" height="793.5" viewBox="0 0 1006.6 793.5"><defs><linearGradient id="bgL" x1="0" y1="0" x2="1" y2="0"><stop offset="0" stop-color="rgb(32,32,32)"/><stop offset="1" stop-color="rgb(254,254,254)"/></linearGradient></defs><rect x="0" y="0" width="1006.60" height="793.55" fill="url(#bgL)"/><line x1="1.00" y1="0" x2="1.00" y2="793.55" stroke="#0e4646" stroke-width="2"/><line x1="101.20" y1="0" x2="101.20" y2="793.55" stroke="#0e4646" stroke-width="2"/><line x1="201.70" y1="0" x2="201.70" y2="793.55" stroke="#0e4646" stroke-width="2"/><line x1="302.20" y1="0" x2="302.20" y2="793.55" stroke="#0e4646" stroke-width="2"/><line x1="402.70" y1="0" x2="402.70" y2="793.55" stroke="#0e4646" stroke-width="2"/><line x1="503.20" y1="0" x2="503.20" y2="793.55" stroke="#0e4646" stroke-width="2"/><line x1="603.70" y1="0" x2="603.70" y2="793.55" stroke="#0e4646" stroke-width="2"/><line x1="704.20" y1="0" x2="704.20" y2="793.55" stroke="#0e4646" stroke-width="2"/><line x1="804.70" y1="0" x2="804.70" y2="793.55" stroke="#0e4646" stroke-width="2"/><line x1="905.20" y1="0" x2="905.20" y2="793.55" stroke="#0e4646" stroke-width="2"/><line x1="0" y1="686.79" x2="1006.5999999999999" y2="686.79" stroke="#0e4646" stroke-width="2"/><line x1="0" y1="581.23" x2="1006.5999999999999" y2="581.23" stroke="#0e4646" stroke-width="2"/><line x1="0" y1="475.67" x2="1006.5999999999999" y2="475.67" stroke="#0e4646" stroke-width="2"/><line x1="0" y1="370.11" x2="1006.5999999999999" y2="370.11" stroke="#0e4646" stroke-width="2"/><line x1="0" y1="264.55" x2="1006.5999999999999" y2="264.55" stroke="#0e4646" stroke-width="2"/><line x1="0" y1="158.99" x2="1006.5999999999999" y2="158.99" stroke="#0e4646" stroke-width="2"/><line x1="0" y1="53.43" x2="1006.5999999999999" y2="53.43" stroke="#0e4646" stroke-width="2"/><polyline points="0.0,792.3 45.5,791.7 95.9,788.7 146.4,783.5 196.8,774.3 247.2,763.4 297.7,748.3 348.2,729.4 398.6,705.8 449.1,678.3 499.5,645.2 550.0,606.6 600.4,563.6 650.9,514.7 701.3,459.3 751.8,399.8 802.2,329.6 852.7,259.6 903.1,179.5 953.6,91.9 1004.0,4.9" fill="none" stroke="#ffff00" stroke-width="2.6" stroke-linejoin="miter"/><rect x="-5.0" y="787.3" width="10" height="10" fill="#ffff00"/><rect x="40.5" y="786.7" width="10" height="10" fill="#ffff00"/><rect x="90.9" y="783.7" width="10" height="10" fill="#ffff00"/><rect x="141.4" y="778.5" width="10" height="10" fill="#ffff00"/><rect x="191.8" y="769.3" width="10" height="10" fill="#ffff00"/><rect x="242.2" y="758.4" width="10" height="10" fill="#ffff00"/><rect x="292.7" y="743.3" width="10" height="10" fill="#ffff00"/><rect x="343.2" y="724.4" width="10" height="10" fill="#ffff00"/><rect x="393.6" y="700.8" width="10" height="10" fill="#ffff00"/><rect x="444.1" y="673.3" width="10" height="10" fill="#ffff00"/><rect x="494.5" y="640.2" width="10" height="10" fill="#ffff00"/><rect x="545.0" y="601.6" width="10" height="10" fill="#ffff00"/><rect x="595.4" y="558.6" width="10" height="10" fill="#ffff00"/><rect x="645.9" y="509.7" width="10" height="10" fill="#ffff00"/><rect x="696.3" y="454.3" width="10" height="10" fill="#ffff00"/><rect x="746.8" y="394.8" width="10" height="10" fill="#ffff00"/><rect x="797.2" y="324.6" width="10" height="10" fill="#ffff00"/><rect x="847.7" y="254.6" width="10" height="10" fill="#ffff00"/><rect x="898.1" y="174.5" width="10" height="10" fill="#ffff00"/><rect x="948.6" y="86.9" width="10" height="10" fill="#ffff00"/><rect x="999.0" y="-0.1" width="10" height="10" fill="#ffff00"/><rect x="-5.0" y="787.3" width="10" height="10" fill="#e4e4e4"/><rect x="40.5" y="786.8" width="10" height="10" fill="#e4e4e4"/><rect x="90.9" y="784.2" width="10" height="10" fill="#e4e4e4"/><rect x="141.4" y="779.1" width="10" height="10" fill="#e4e4e4"/><rect x="191.8" y="770.8" width="10" height="10" fill="#e4e4e4"/><rect x="242.2" y="759.1" width="10" height="10" fill="#e4e4e4"/><rect x="292.7" y="743.6" width="10" height="10" fill="#e4e4e4"/><rect x="343.2" y="724.0" width="10" height="10" fill="#e4e4e4"/><rect x="393.6" y="700.0" width="10" height="10" fill="#e4e4e4"/><rect x="444.1" y="671.5" width="10" height="10" fill="#e4e4e4"/><rect x="494.5" y="638.2" width="10" height="10" fill="#e4e4e4"/><rect x="545.0" y="599.8" width="10" height="10" fill="#e4e4e4"/><rect x="595.4" y="556.2" width="10" height="10" fill="#e4e4e4"/><rect x="645.9" y="507.3" width="10" height="10" fill="#e4e4e4"/><rect x="696.3" y="452.8" width="10" height="10" fill="#e4e4e4"/><rect x="746.8" y="392.5" width="10" height="10" fill="#e4e4e4"/><rect x="797.2" y="326.4" width="10" height="10" fill="#e4e4e4"/><rect x="847.7" y="254.2" width="10" height="10" fill="#e4e4e4"/><rect x="898.1" y="175.8" width="10" height="10" fill="#e4e4e4"/><rect x="948.6" y="91.1" width="10" height="10" fill="#e4e4e4"/><rect x="999.0" y="-0.1" width="10" height="10" fill="#e4e4e4"/></svg>
<div id="t44" class="t" style="left:505.0px;top:577.7px;font-size:25.5px;font-family:'Liberation Serif',serif;transform:scaleX(0.9952);color:#d4d4d4">140 cd m-2</div>
<div id="t45" class="t" style="left:505.0px;top:683.4px;font-size:25.5px;font-family:'Liberation Serif',serif;transform:scaleX(0.9952);color:#d4d4d4">120 cd m-2</div>
<div id="t46" class="t" style="left:505.0px;top:789.0px;font-size:25.5px;font-family:'Liberation Serif',serif;transform:scaleX(0.9952);color:#d4d4d4">100 cd m-2</div>
<div id="t47" class="t" style="left:505.0px;top:894.6px;font-size:25.5px;font-family:'Liberation Serif',serif;transform:scaleX(0.9961);color:#d4d4d4">80 cd m-2</div>
<div id="t48" class="t" style="left:505.0px;top:1000.2px;font-size:25.5px;font-family:'Liberation Serif',serif;transform:scaleX(0.9961);color:#d4d4d4">60 cd m-2</div>
<div id="t49" class="t" style="left:505.0px;top:1105.8px;font-size:25.5px;font-family:'Liberation Serif',serif;transform:scaleX(0.9961);color:#d4d4d4">40 cd m-2</div>
<div id="t50" class="t" style="left:505.0px;top:1211.5px;font-size:25.5px;font-family:'Liberation Serif',serif;transform:scaleX(0.9961);color:#d4d4d4">20 cd m-2</div>
<div id="t51" class="t" style="left:605.0px;top:1318.6px;font-size:25.5px;font-family:'Liberation Serif',serif;transform:scaleX(0.9916);color:#c8c8c8">10% White</div>
<div id="t52" class="t" style="left:806.2px;top:1318.6px;font-size:25.5px;font-family:'Liberation Serif',serif;transform:scaleX(0.9916);color:#bebebe">30% White</div>
<div id="t53" class="t" style="left:1007.4px;top:1318.6px;font-size:25.5px;font-family:'Liberation Serif',serif;transform:scaleX(0.9916);color:#8c8c8c">50% White</div>
<div id="t54" class="t" style="left:1208.6px;top:1318.6px;font-size:25.5px;font-family:'Liberation Serif',serif;transform:scaleX(0.9916);color:#585858">70% White</div>
<div id="t55" class="t" style="left:1409.8px;top:1318.6px;font-size:25.5px;font-family:'Liberation Serif',serif;transform:scaleX(0.9916);color:#1a1a1a">90% White</div>
<div id="t56" class="t" style="left:927.0px;top:560.9px;font-size:14px;font-weight:bold;transform:scaleX(1.0297);color:#d8d020">Luminance Response</div>
<div id="t57" class="t" style="left:1302.0px;top:1279.4px;font-size:18px;font-weight:bold;transform:scaleX(1.1089);color:#a4a4a4">hcfr.sourceforge.net</div>
</div>
<div class="a" style="left:0;top:0;width:2560px;height:1440px;clip-path:inset(553.75px 37.09999999999991px 93.29999999999995px 1517.3px)">
<svg class="a" style="left:1517.3px;top:553.75px;overflow:hidden" width="1005.6" height="793.0" viewBox="0 0 1005.6 793.0"><defs><linearGradient id="bgG" x1="0" y1="0" x2="1" y2="0"><stop offset="0" stop-color="rgb(32,32,32)"/><stop offset="1" stop-color="rgb(254,254,254)"/></linearGradient></defs><rect x="0" y="0" width="1005.60" height="792.95" fill="url(#bgG)"/><line x1="1.00" y1="0" x2="1.00" y2="792.95" stroke="#0e4646" stroke-width="2"/><line x1="101.40" y1="0" x2="101.40" y2="792.95" stroke="#0e4646" stroke-width="2"/><line x1="201.80" y1="0" x2="201.80" y2="792.95" stroke="#0e4646" stroke-width="2"/><line x1="302.20" y1="0" x2="302.20" y2="792.95" stroke="#0e4646" stroke-width="2"/><line x1="402.60" y1="0" x2="402.60" y2="792.95" stroke="#0e4646" stroke-width="2"/><line x1="503.00" y1="0" x2="503.00" y2="792.95" stroke="#0e4646" stroke-width="2"/><line x1="603.40" y1="0" x2="603.40" y2="792.95" stroke="#0e4646" stroke-width="2"/><line x1="703.80" y1="0" x2="703.80" y2="792.95" stroke="#0e4646" stroke-width="2"/><line x1="804.20" y1="0" x2="804.20" y2="792.95" stroke="#0e4646" stroke-width="2"/><line x1="904.60" y1="0" x2="904.60" y2="792.95" stroke="#0e4646" stroke-width="2"/><line x1="0" y1="753.55" x2="1005.6" y2="753.55" stroke="#0e4646" stroke-width="2"/><line x1="0" y1="713.85" x2="1005.6" y2="713.85" stroke="#0e4646" stroke-width="2"/><line x1="0" y1="674.15" x2="1005.6" y2="674.15" stroke="#0e4646" stroke-width="2"/><line x1="0" y1="634.45" x2="1005.6" y2="634.45" stroke="#0e4646" stroke-width="2"/><line x1="0" y1="594.75" x2="1005.6" y2="594.75" stroke="#0e4646" stroke-width="2"/><line x1="0" y1="555.05" x2="1005.6" y2="555.05" stroke="#0e4646" stroke-width="2"/><line x1="0" y1="515.35" x2="1005.6" y2="515.35" stroke="#0e4646" stroke-width="2"/><line x1="0" y1="475.65" x2="1005.6" y2="475.65" stroke="#0e4646" stroke-width="2"/><line x1="0" y1="435.95" x2="1005.6" y2="435.95" stroke="#0e4646" stroke-width="2"/><line x1="0" y1="396.25" x2="1005.6" y2="396.25" stroke="#0e4646" stroke-width="2"/><line x1="0" y1="356.55" x2="1005.6" y2="356.55" stroke="#0e4646" stroke-width="2"/><line x1="0" y1="316.85" x2="1005.6" y2="316.85" stroke="#0e4646" stroke-width="2"/><line x1="0" y1="277.15" x2="1005.6" y2="277.15" stroke="#0e4646" stroke-width="2"/><line x1="0" y1="237.45" x2="1005.6" y2="237.45" stroke="#0e4646" stroke-width="2"/><line x1="0" y1="197.75" x2="1005.6" y2="197.75" stroke="#0e4646" stroke-width="2"/><line x1="0" y1="158.05" x2="1005.6" y2="158.05" stroke="#0e4646" stroke-width="2"/><line x1="0" y1="118.35" x2="1005.6" y2="118.35" stroke="#0e4646" stroke-width="2"/><line x1="0" y1="78.65" x2="1005.6" y2="78.65" stroke="#0e4646" stroke-width="2"/><line x1="0" y1="38.95" x2="1005.6" y2="38.95" stroke="#0e4646" stroke-width="2"/><line x1="45.7" y1="238.2" x2="1005.6" y2="238.2" stroke="#ffffff" stroke-width="2" stroke-dasharray="4 4"/><polyline points="45.7,243.2 96.2,264.2 146.7,250.6 197.2,259.2 247.7,244.2 298.2,239.2 348.7,234.2 399.2,233.2 449.7,229.2 500.2,229.2 550.7,230.6 601.2,229.2 651.7,229.2 702.2,232.0 752.7,229.2 803.2,244.0 853.7,235.2 904.2,245.2 954.7,284.0" fill="none" stroke="#ffff00" stroke-width="3"/><rect x="40.7" y="238.2" width="10" height="10" fill="#ffff00"/><rect x="91.2" y="259.2" width="10" height="10" fill="#ffff00"/><rect x="141.7" y="245.6" width="10" height="10" fill="#ffff00"/><rect x="192.2" y="254.2" width="10" height="10" fill="#ffff00"/><rect x="242.7" y="239.2" width="10" height="10" fill="#ffff00"/><rect x="293.2" y="234.2" width="10" height="10" fill="#ffff00"/><rect x="343.7" y="229.2" width="10" height="10" fill="#ffff00"/><rect x="394.2" y="228.2" width="10" height="10" fill="#ffff00"/><rect x="444.7" y="224.2" width="10" height="10" fill="#ffff00"/><rect x="495.2" y="224.2" width="10" height="10" fill="#ffff00"/><rect x="545.7" y="225.6" width="10" height="10" fill="#ffff00"/><rect x="596.2" y="224.2" width="10" height="10" fill="#ffff00"/><rect x="646.7" y="224.2" width="10" height="10" fill="#ffff00"/><rect x="697.2" y="227.0" width="10" height="10" fill="#ffff00"/><rect x="747.7" y="224.2" width="10" height="10" fill="#ffff00"/><rect x="798.2" y="239.0" width="10" height="10" fill="#ffff00"/><rect x="848.7" y="230.2" width="10" height="10" fill="#ffff00"/><rect x="899.2" y="240.2" width="10" height="10" fill="#ffff00"/><rect x="949.7" y="279.0" width="10" height="10" fill="#ffff00"/><rect x="40.7" y="233.2" width="10" height="10" fill="#e4e4e4"/><rect x="91.2" y="233.2" width="10" height="10" fill="#e4e4e4"/><rect x="141.7" y="233.2" width="10" height="10" fill="#e4e4e4"/><rect x="192.2" y="233.2" width="10" height="10" fill="#e4e4e4"/><rect x="242.7" y="233.2" width="10" height="10" fill="#e4e4e4"/><rect x="293.2" y="233.2" width="10" height="10" fill="#e4e4e4"/><rect x="343.7" y="233.2" width="10" height="10" fill="#e4e4e4"/><rect x="394.2" y="233.2" width="10" height="10" fill="#e4e4e4"/><rect x="444.7" y="233.2" width="10" height="10" fill="#e4e4e4"/><rect x="495.2" y="233.2" width="10" height="10" fill="#e4e4e4"/><rect x="545.7" y="233.2" width="10" height="10" fill="#e4e4e4"/><rect x="596.2" y="233.2" width="10" height="10" fill="#e4e4e4"/><rect x="646.7" y="233.2" width="10" height="10" fill="#e4e4e4"/><rect x="697.2" y="233.2" width="10" height="10" fill="#e4e4e4"/><rect x="747.7" y="233.2" width="10" height="10" fill="#e4e4e4"/><rect x="798.2" y="233.2" width="10" height="10" fill="#e4e4e4"/><rect x="848.7" y="233.2" width="10" height="10" fill="#e4e4e4"/><rect x="899.2" y="233.2" width="10" height="10" fill="#e4e4e4"/><rect x="949.7" y="233.2" width="10" height="10" fill="#e4e4e4"/></svg>
<div id="t58" class="t" style="left:1520.0px;top:564.1px;font-size:25.5px;font-family:'Liberation Serif',serif;transform:scaleX(0.9882);color:#d4d4d4">2.9</div>
<div id="t59" class="t" style="left:1520.0px;top:603.8px;font-size:25.5px;font-family:'Liberation Serif',serif;transform:scaleX(0.9882);color:#d4d4d4">2.8</div>
<div id="t60" class="t" style="left:1520.0px;top:643.5px;font-size:25.5px;font-family:'Liberation Serif',serif;transform:scaleX(0.9882);color:#d4d4d4">2.7</div>
<div id="t61" class="t" style="left:1520.0px;top:683.2px;font-size:25.5px;font-family:'Liberation Serif',serif;transform:scaleX(0.9882);color:#d4d4d4">2.6</div>
<div id="t62" class="t" style="left:1520.0px;top:722.9px;font-size:25.5px;font-family:'Liberation Serif',serif;transform:scaleX(0.9882);color:#d4d4d4">2.5</div>
<div id="t63" class="t" style="left:1520.0px;top:762.6px;font-size:25.5px;font-family:'Liberation Serif',serif;transform:scaleX(0.9882);color:#d4d4d4">2.4</div>
<div id="t64" class="t" style="left:1520.0px;top:802.3px;font-size:25.5px;font-family:'Liberation Serif',serif;transform:scaleX(0.9882);color:#d4d4d4">2.3</div>
<div id="t65" class="t" style="left:1520.0px;top:842.0px;font-size:25.5px;font-family:'Liberation Serif',serif;transform:scaleX(0.9882);color:#d4d4d4">2.2</div>
<div id="t66" class="t" style="left:1520.0px;top:881.7px;font-size:25.5px;font-family:'Liberation Serif',serif;transform:scaleX(0.9882);color:#d4d4d4">2.1</div>
<div id="t67" class="t" style="left:1520.0px;top:921.4px;font-size:25.5px;font-family:'Liberation Serif',serif;transform:scaleX(0.8627);color:#d4d4d4">2</div>
<div id="t68" class="t" style="left:1520.0px;top:961.1px;font-size:25.5px;font-family:'Liberation Serif',serif;transform:scaleX(0.9882);color:#d4d4d4">1.9</div>
<div id="t69" class="t" style="left:1520.0px;top:1000.8px;font-size:25.5px;font-family:'Liberation Serif',serif;transform:scaleX(0.9882);color:#d4d4d4">1.8</div>
<div id="t70" class="t" style="left:1520.0px;top:1040.5px;font-size:25.5px;font-family:'Liberation Serif',serif;transform:scaleX(0.9882);color:#d4d4d4">1.7</div>
<div id="t71" class="t" style="left:1520.0px;top:1080.2px;font-size:25.5px;font-family:'Liberation Serif',serif;transform:scaleX(0.9882);color:#d4d4d4">1.6</div>
<div id="t72" class="t" style="left:1520.0px;top:1119.9px;font-size:25.5px;font-family:'Liberation Serif',serif;transform:scaleX(0.9882);color:#d4d4d4">1.5</div>
<div id="t73" class="t" style="left:1520.0px;top:1159.6px;font-size:25.5px;font-family:'Liberation Serif',serif;transform:scaleX(0.9882);color:#d4d4d4">1.4</div>
<div id="t74" class="t" style="left:1520.0px;top:1199.3px;font-size:25.5px;font-family:'Liberation Serif',serif;transform:scaleX(0.9882);color:#d4d4d4">1.3</div>
<div id="t75" class="t" style="left:1520.0px;top:1239.0px;font-size:25.5px;font-family:'Liberation Serif',serif;transform:scaleX(0.9882);color:#d4d4d4">1.2</div>
<div id="t76" class="t" style="left:1520.0px;top:1278.7px;font-size:25.5px;font-family:'Liberation Serif',serif;transform:scaleX(0.9882);color:#d4d4d4">1.1</div>
<div id="t77" class="t" style="left:1620.0px;top:1318.6px;font-size:25.5px;font-family:'Liberation Serif',serif;transform:scaleX(0.9916);color:#c8c8c8">10% White</div>
<div id="t78" class="t" style="left:1821.1px;top:1318.6px;font-size:25.5px;font-family:'Liberation Serif',serif;transform:scaleX(0.9916);color:#bebebe">30% White</div>
<div id="t79" class="t" style="left:2022.2px;top:1318.6px;font-size:25.5px;font-family:'Liberation Serif',serif;transform:scaleX(0.9916);color:#8c8c8c">50% White</div>
<div id="t80" class="t" style="left:2223.4px;top:1318.6px;font-size:25.5px;font-family:'Liberation Serif',serif;transform:scaleX(0.9916);color:#585858">70% White</div>
<div id="t81" class="t" style="left:2424.5px;top:1318.6px;font-size:25.5px;font-family:'Liberation Serif',serif;transform:scaleX(0.9916);color:#1a1a1a">90% White</div>
<div id="t82" class="t" style="left:1971.0px;top:560.9px;font-size:14px;transform:scaleX(1.0057);color:#d8d020">EOTF(Gamma)</div>
<div id="t83" class="t" style="left:2316.0px;top:1279.4px;font-size:18px;font-weight:bold;transform:scaleX(1.1089);color:#a4a4a4">hcfr.sourceforge.net</div>
</div>
<div class="a" style="left:0px;top:1390px;width:2560px;height:4px;background:#fafafa"></div>
<div class="a" style="left:0px;top:1393px;width:2560px;height:2px;background:#000"></div>
<div class="a" style="left:0px;top:1395px;width:2560px;height:23px;background:#f0f0f0"></div>
<div class="a" style="left:0px;top:1394px;width:68px;height:24px;background:#000"></div>
<div class="a" style="left:1px;top:1395px;width:20px;height:21px;background:#f0f0f0;border-right:1px solid #8a8a8a;border-bottom:1px solid #8a8a8a"></div>
<div class="a" style="left:23px;top:1395px;width:20px;height:21px;background:#f0f0f0;border-right:1px solid #8a8a8a;border-bottom:1px solid #8a8a8a"></div>
<div class="a" style="left:45px;top:1395px;width:20px;height:21px;background:#f0f0f0;border-right:1px solid #8a8a8a;border-bottom:1px solid #8a8a8a"></div>
<svg class="a" style="left:5px;top:1401px;" width="12" height="11" viewBox="0 0 12 11"><path d="M1 1 L10 10 M10 1 L1 10" stroke="#000" stroke-width="1.8"/></svg>
<svg class="a" style="left:29px;top:1401px;" width="8" height="11" viewBox="0 0 8 11"><path d="M6 0 V10 L1 5 Z" fill="#000"/></svg>
<svg class="a" style="left:52px;top:1401px;" width="8" height="11" viewBox="0 0 8 11"><path d="M1 0 V10 L6 5 Z" fill="#000"/></svg>
<svg class="a" style="left:0px;top:1394px;" width="460" height="25" viewBox="0 0 460 25"><path d="M68 0.5 L79 23 H149 L160 0.5 Z" fill="#fff"/><path d="M68 0 L79 23 H149 L160 0" fill="none" stroke="#000" stroke-width="1"/><path d="M156 7 L162 23 H233 L244 1" fill="none" stroke="#000" stroke-width="1"/><path d="M236 8 L242 23 H298 L309 1" fill="none" stroke="#000" stroke-width="1"/><path d="M302 8 L308 23 H430 L441 1" fill="none" stroke="#000" stroke-width="1"/><line x1="79" y1="23.5" x2="441" y2="23.5" stroke="#a0a0a0"/></svg>
<div id="t84" class="t" style="left:83.5px;top:1398.9px;font-size:12.5px;font-weight:bold;transform:scaleX(1.0661);">Measures</div>
<div id="t85" class="t" style="left:167.0px;top:1398.9px;font-size:12.5px;transform:scaleX(0.9320);color:#111">Luminance</div>
<div id="t86" class="t" style="left:249.0px;top:1398.9px;font-size:12.5px;transform:scaleX(0.9448);color:#111">Gamma</div>
<div id="t87" class="t" style="left:322.0px;top:1398.9px;font-size:12.5px;transform:scaleX(0.9231);color:#111">Color temperature</div>
<svg class="a" style="left:2349px;top:1396px;" width="18" height="18" viewBox="0 0 18 18"><path d="M1 1 H17 V11 L15 17 H11 L9 13 L7 17 H3 L1 11 Z" fill="#8a8a10" stroke="#000" stroke-width="1.2"/><path d="M4 6 Q8 2 12 5 L13 3 L14 8 L9 8 L11 6 Q8 4 5 7 Z" fill="#f01010"/><path d="M11 12 H16 L15 16 H12 Z" fill="#ffff00"/></svg>
<div class="a" style="left:2468px;top:1396px;width:15px;height:15px;background:#fff;border-top:2px solid #7a7a7a;border-left:2px solid #7a7a7a;border-right:1px solid #e8e8e8;border-bottom:1px solid #e8e8e8"></div>
<div id="t88" class="t" style="left:2491.0px;top:1397.0px;font-size:15px;transform:scaleX(0.8957);">Reference</div>
<div class="a" style="left:0px;top:1418px;width:2560px;height:20px;background:linear-gradient(90deg,#e2e9f3,#e6ecf5 1200px,#e8eef6)"></div>
<div id="t89" class="t" style="left:3.0px;top:1422.8px;font-size:15px;transform:scaleX(0.8995);color:#222">Ready</div>
<div class="a" style="left:2337px;top:1418.5px;width:94px;height:20px;border:1px solid #aac0dc;border-bottom:none;background:#e8eef7"></div>
<div class="a" style="left:2435px;top:1418.5px;width:34px;height:20px;border:1px solid #aac0dc;border-bottom:none;background:#e8eef7"></div>
<div class="a" style="left:2474px;top:1418.5px;width:41px;height:20px;border:1px solid #aac0dc;border-bottom:none;background:#e8eef7"></div>
<div class="a" style="left:2519px;top:1418.5px;width:41px;height:20px;border:1px solid #aac0dc;border-bottom:none;background:#e8eef7"></div>
<div id="t90" class="t" style="left:2477.0px;top:1422.5px;font-size:15px;transform:scaleX(0.9657);">NUM</div>
<div class="a" style="left:0px;top:1438px;width:2560px;height:2px;background:#111"></div>
</body></html>
